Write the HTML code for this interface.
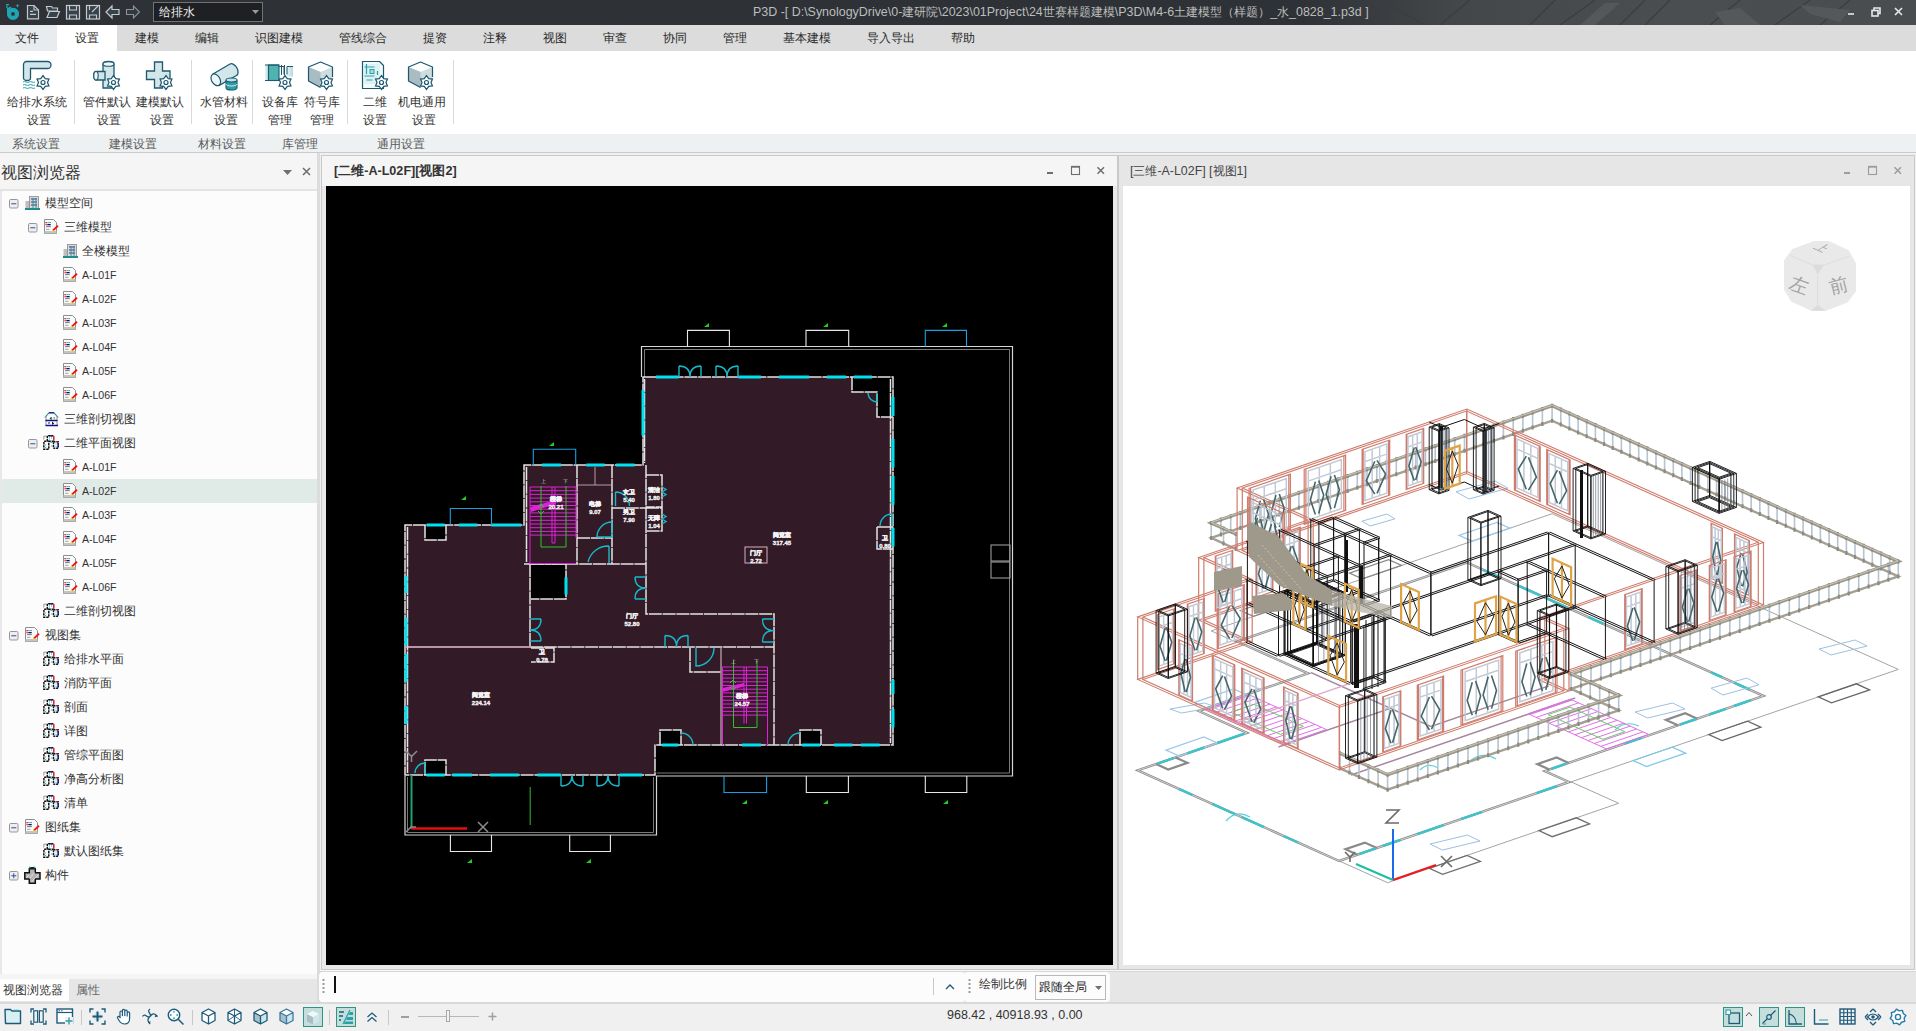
<!DOCTYPE html>
<html><head><meta charset="utf-8"><style>

*{margin:0;padding:0;box-sizing:border-box}
html,body{width:1916px;height:1031px;overflow:hidden;background:#f0f0f0;font-family:"Liberation Sans",sans-serif;color:#333}
.a{position:absolute}
.t12{font-size:12px;white-space:nowrap}
.rb{position:absolute;font-size:12px;line-height:17px;text-align:center;color:#333;white-space:nowrap}
.gl{position:absolute;top:135px;font-size:12px;line-height:18px;color:#5a5a5a;white-space:nowrap}
.sep{position:absolute;top:60px;width:1px;height:64px;background:#d9d9d9}
.tr{position:absolute;height:24px;font-size:12px;line-height:24px;color:#333;white-space:nowrap}
svg{position:absolute;overflow:visible}

</style></head><body>
<div class="a" style="left:0;top:0;width:1916px;height:25px;background:#2e3236"></div>
<div class="a" style="left:1300px;top:0;width:616px;height:25px;background:linear-gradient(90deg,rgba(74,77,80,0) 0%,#44474a 25%,#4b4e51 60%,#4a4d50 100%)"></div>
<svg style="left:1380px;top:0" width="536" height="25" viewBox="0 0 536 25">
<g stroke="#3a3d40" stroke-width="1.2" fill="none">
<path d="M0 0 L45 25 M60 25 L90 0 M150 25 L175 0 M180 25 L215 0 M240 25 L265 0 M265 25 L290 0 M330 25 L360 0 M395 25 L430 0 M440 25 L470 0"/>
</g>
<g fill="#55585b"><path d="M200 25 L225 3 L240 3 L215 25Z M335 12 L360 8 L380 25 L345 25Z M420 5 L470 10 L460 22 L430 14Z"/></g>
</svg>
<svg style="left:0;top:0" width="25" height="25" viewBox="0 0 25 25">
<circle cx="13" cy="13.9" r="4" fill="none" stroke="#1fa6b4" stroke-width="4.2"/>
<rect x="7" y="7.6" width="3.4" height="6.4" fill="#1fa6b4"/><rect x="9" y="6.8" width="2.2" height="1.6" fill="#1fa6b4"/>
<rect x="6" y="4" width="3" height="1.2" fill="#1fa6b4"/><rect x="6.2" y="5.5" width="1.4" height="2.3" fill="#1fa6b4"/>
<path d="M17.5 3.8l0.7 1.5 1.5 0.5-1.5 0.5-0.7 1.5-0.7-1.5-1.5-0.5 1.5-0.5z" fill="#1fa6b4"/>
</svg>
<svg style="left:0;top:0" width="150" height="25" viewBox="0 0 150 25">
<g stroke="#c5cacd" stroke-width="1.2" fill="#36424c">
<path d="M27.5 5.5h6.5l4.5 4.5v8.8h-11z"/>
<path d="M46.5 6.5h5l1 1.5h5v3h-10z M47 17.5l2.5-6h10l-2.5 6z"/>
<rect x="66.5" y="5.5" width="13" height="13.5"/>
<rect x="86.5" y="5.5" width="13" height="13.5"/>
<path d="M106 12l6-6v3.5h7v5h-7v3.5z"/>
</g>
<g stroke="#c5cacd" stroke-width="1.1" fill="none">
<path d="M30 11.4h3M30 14.4h6M34 5.5v4.5h4.5"/>
<path d="M69.5 5.5v4.5h7v-4.5 M69.5 19v-4h7v4"/>
<path d="M89.5 5.5v4.5 M89.5 19v-4h7v4 M92 12l6-6"/>
</g>
<path d="M126.5 9.5h7v-3.5l6 6-6 6v-3.5h-7z" stroke="#8d9296" stroke-width="1.1" fill="#323a40"/>
</svg>
<div class="a" style="left:153px;top:2px;width:110px;height:20px;background:#1f2023;border:1px solid #707274"></div>
<div class="a t12" style="left:159px;top:3px;line-height:18px;color:#f0f0f0">给排水</div>
<svg style="left:252px;top:10px" width="8" height="5"><path d="M0 0h7l-3.5 4z" fill="#9a9a9a"/></svg>
<div class="a" style="left:753px;top:2px;font-size:12.45px;line-height:20px;color:#bdbdbd;white-space:nowrap">P3D -[ D:\SynologyDrive\0-建研院\2023\01Project\24世赛样题建模\P3D\M4-6土建模型（样题）_水_0828_1.p3d ]</div>
<svg style="left:1840px;top:0" width="76" height="25" viewBox="0 0 76 25">
<g stroke="#e8e8e8" stroke-width="1.6" fill="none">
<path d="M8 14h6"/>
<rect x="32" y="10.5" width="6" height="5.5"/><path d="M34 10.5v-2.5h6v5.5h-2"/>
<path d="M55 8l7 7M62 8l-7 7"/>
</g></svg>
<div class="a" style="left:0;top:25px;width:1916px;height:26px;background:#dcdcdc"></div>
<div class="a" style="left:0;top:25px;width:57px;height:26px;background:#e9ecee"></div>
<div class="a" style="left:57px;top:25px;width:60px;height:26px;background:#ffffff"></div>
<div class="a t12" style="left:15px;top:25px;line-height:26px;color:#2a2a2a">文件</div>
<div class="a t12" style="left:75px;top:25px;line-height:26px;color:#2a2a2a">设置</div>
<div class="a t12" style="left:135px;top:25px;line-height:26px;color:#2a2a2a">建模</div>
<div class="a t12" style="left:195px;top:25px;line-height:26px;color:#2a2a2a">编辑</div>
<div class="a t12" style="left:255px;top:25px;line-height:26px;color:#2a2a2a">识图建模</div>
<div class="a t12" style="left:339px;top:25px;line-height:26px;color:#2a2a2a">管线综合</div>
<div class="a t12" style="left:423px;top:25px;line-height:26px;color:#2a2a2a">提资</div>
<div class="a t12" style="left:483px;top:25px;line-height:26px;color:#2a2a2a">注释</div>
<div class="a t12" style="left:543px;top:25px;line-height:26px;color:#2a2a2a">视图</div>
<div class="a t12" style="left:603px;top:25px;line-height:26px;color:#2a2a2a">审查</div>
<div class="a t12" style="left:663px;top:25px;line-height:26px;color:#2a2a2a">协同</div>
<div class="a t12" style="left:723px;top:25px;line-height:26px;color:#2a2a2a">管理</div>
<div class="a t12" style="left:783px;top:25px;line-height:26px;color:#2a2a2a">基本建模</div>
<div class="a t12" style="left:867px;top:25px;line-height:26px;color:#2a2a2a">导入导出</div>
<div class="a t12" style="left:951px;top:25px;line-height:26px;color:#2a2a2a">帮助</div>
<div class="a" style="left:0;top:51px;width:1916px;height:83px;background:#fff"></div>
<div class="a" style="left:0;top:134px;width:1916px;height:18px;background:#eef1f2"></div>
<div class="a" style="left:0;top:152px;width:1916px;height:1px;background:#c9cccd"></div>
<div class="sep" style="left:74px"></div>
<div class="sep" style="left:191px"></div>
<div class="sep" style="left:252px"></div>
<div class="sep" style="left:347px"></div>
<div class="sep" style="left:453px"></div>
<div class="rb" style="left:7px;top:94px">给排水系统</div>
<div class="rb" style="left:27px;top:112px">设置</div>
<div class="rb" style="left:83px;top:94px">管件默认</div>
<div class="rb" style="left:97px;top:112px">设置</div>
<div class="rb" style="left:136px;top:94px">建模默认</div>
<div class="rb" style="left:150px;top:112px">设置</div>
<div class="rb" style="left:200px;top:94px">水管材料</div>
<div class="rb" style="left:214px;top:112px">设置</div>
<div class="rb" style="left:262px;top:94px">设备库</div>
<div class="rb" style="left:268px;top:112px">管理</div>
<div class="rb" style="left:304px;top:94px">符号库</div>
<div class="rb" style="left:310px;top:112px">管理</div>
<div class="rb" style="left:363px;top:94px">二维</div>
<div class="rb" style="left:363px;top:112px">设置</div>
<div class="rb" style="left:398px;top:94px">机电通用</div>
<div class="rb" style="left:412px;top:112px">设置</div>
<div class="gl" style="left:12px">系统设置</div>
<div class="gl" style="left:109px">建模设置</div>
<div class="gl" style="left:198px">材料设置</div>
<div class="gl" style="left:282px">库管理</div>
<div class="gl" style="left:377px">通用设置</div>
<svg style="left:22px;top:60px" width="30" height="30" viewBox="0 0 30 30">
<path d="M1.5 18V4.5a3 3 0 0 1 3-3H25.5a2.2 2.2 0 0 1 0 7H8.5V18a3.5 2.5 0 0 1-7 0z" fill="#d3e7eb" stroke="#1d5870" stroke-width="1.3"/>
<path d="M1 22c2-1.5 4 1.5 6 0s4 1.5 6 0 M1 25c2-1.5 4 1.5 6 0s4 1.5 6 0 M1 28c2-1.5 4 1.5 6 0s4 1.5 6 0" fill="none" stroke="#2a9fa8" stroke-width="1"/>
<polygon points="26.98,25.95 23.25,26.40 21.00,29.40 18.75,26.40 15.02,25.95 16.50,22.50 15.02,19.05 18.75,18.60 21.00,15.60 23.25,18.60 26.98,19.05 25.50,22.50" fill="#fff" stroke="#1d5870" stroke-width="1.2" stroke-linejoin="miter"/><circle cx="21" cy="22.5" r="2" fill="none" stroke="#1d5870" stroke-width="1.2"/></svg>
<svg style="left:93px;top:60px" width="30" height="30" viewBox="0 0 30 30">
<path d="M10 4a5.5 2.5 0 0 1 11 0V28H10z" fill="#d3e7eb" stroke="#1d5870" stroke-width="1.3"/>
<ellipse cx="15.5" cy="4" rx="5.5" ry="2.3" fill="#eef6f7" stroke="#1d5870" stroke-width="1.1"/>
<path d="M3 11.5h9v8.5H3a2.3 4.25 0 0 1 0-8.5z" fill="#d3e7eb" stroke="#1d5870" stroke-width="1.3"/>
<ellipse cx="3" cy="15.75" rx="2.2" ry="4.2" fill="#eef6f7" stroke="#1d5870" stroke-width="1.1"/>
<polygon points="26.48,25.95 22.75,26.40 20.50,29.40 18.25,26.40 14.52,25.95 16.00,22.50 14.52,19.05 18.25,18.60 20.50,15.60 22.75,18.60 26.48,19.05 25.00,22.50" fill="#fff" stroke="#1d5870" stroke-width="1.2" stroke-linejoin="miter"/><circle cx="20.5" cy="22.5" r="2" fill="none" stroke="#1d5870" stroke-width="1.2"/></svg>
<svg style="left:145px;top:60px" width="30" height="30" viewBox="0 0 30 30">
<path d="M9.5 2h8v9h7.5v8.5h-7.5V28h-8V19.5H1.5V11h8z" fill="#d3e7eb" stroke="#1d5870" stroke-width="1.3"/>
<polygon points="26.98,25.95 23.25,26.40 21.00,29.40 18.75,26.40 15.02,25.95 16.50,22.50 15.02,19.05 18.75,18.60 21.00,15.60 23.25,18.60 26.98,19.05 25.50,22.50" fill="#fff" stroke="#1d5870" stroke-width="1.2" stroke-linejoin="miter"/><circle cx="21" cy="22.5" r="2" fill="none" stroke="#1d5870" stroke-width="1.2"/></svg>
<svg style="left:208px;top:60px" width="31" height="30" viewBox="0 0 31 30">
<path d="M5 14L22 4a4 6.5 -30 0 1 6.5 11.5L11 25.5z" fill="#d3e7eb" stroke="#1d5870" stroke-width="1.3"/>
<ellipse cx="7.8" cy="19.8" rx="4.2" ry="6.3" transform="rotate(-30 7.8 19.8)" fill="#eef6f7" stroke="#1d5870" stroke-width="1.2"/>
<path d="M18 20v8a5.5 2 0 0 0 11 0v-8" fill="#2a9fa8" stroke="#1d5870" stroke-width="1.1"/>
<ellipse cx="23.5" cy="20" rx="5.5" ry="2" fill="#bfe3e6" stroke="#1d5870" stroke-width="1.1"/>
<path d="M18 24a5.5 2 0 0 0 11 0" fill="none" stroke="#fff" stroke-width="0.8"/>
</svg>
<svg style="left:264px;top:60px" width="32" height="30" viewBox="0 0 32 30">
<defs><linearGradient id="gb1" x1="0" x2="1"><stop offset="0" stop-color="#e8f4f6"/><stop offset="1" stop-color="#b8d8dc"/></linearGradient></defs>
<rect x="1" y="5" width="3.5" height="15.5" fill="url(#gb1)"/>
<rect x="4.5" y="5" width="10.5" height="15.5" fill="#4fb3b0" stroke="#1d5870" stroke-width="1.1"/>
<path d="M1 5h14 M1 20.5h14" stroke="#1d5870" stroke-width="1.2"/>
<path d="M15 6.5h5v8 M17.5 5v10 M20.5 5v10" stroke="#1d5870" stroke-width="1" fill="none"/>
<rect x="23" y="6.5" width="6" height="10" fill="url(#gb1)"/><path d="M23 6.5h6 M23 6.5v8" stroke="#1d5870" stroke-width="1" fill="none"/>
<polygon points="26.98,25.95 23.25,26.40 21.00,29.40 18.75,26.40 15.02,25.95 16.50,22.50 15.02,19.05 18.75,18.60 21.00,15.60 23.25,18.60 26.98,19.05 25.50,22.50" fill="#fff" stroke="#1d5870" stroke-width="1.2" stroke-linejoin="miter"/><circle cx="21" cy="22.5" r="2" fill="none" stroke="#1d5870" stroke-width="1.2"/></svg>
<svg style="left:306px;top:60px" width="30" height="30" viewBox="0 0 30 30">
<path d="M2.5 7L14.5 2 26.5 7V21L14.5 27.5 2.5 21z" fill="#cfdcdf"/>
<path d="M2.5 7L14.5 2 26.5 7 14.5 12z" fill="#ffffff"/>
<path d="M2.5 7L14.5 12V27.5L2.5 21z" fill="#a9bcc1"/>
<path d="M14.5 27.5L2.5 21V7L14.5 2 26.5 7V17" fill="none" stroke="#1d5870" stroke-width="1.2" stroke-linejoin="round"/>
<polygon points="26.48,25.95 22.75,26.40 20.50,29.40 18.25,26.40 14.52,25.95 16.00,22.50 14.52,19.05 18.25,18.60 20.50,15.60 22.75,18.60 26.48,19.05 25.00,22.50" fill="#fff" stroke="#1d5870" stroke-width="1.2" stroke-linejoin="miter"/><circle cx="20.5" cy="22.5" r="2" fill="none" stroke="#1d5870" stroke-width="1.2"/></svg>
<svg style="left:361px;top:60px" width="30" height="30" viewBox="0 0 30 30">
<path d="M1.5 1.5h17l4 4V28.5h-21z" fill="#f4fbfc" stroke="#1d5870" stroke-width="1.2" stroke-linejoin="round"/>
<rect x="3" y="4" width="16" height="20" fill="#def2f6"/>
<path d="M5.5 4v10 M3.5 7h10 M3.5 16h10 M5.5 20h6 M16.5 11v4" stroke="#27a3a8" stroke-width="1.2" fill="none"/>
<rect x="9" y="9.5" width="4" height="4" fill="#a8dcd8" stroke="#27a3a8" stroke-width="1"/>
<polygon points="26.48,25.95 22.75,26.40 20.50,29.40 18.25,26.40 14.52,25.95 16.00,22.50 14.52,19.05 18.25,18.60 20.50,15.60 22.75,18.60 26.48,19.05 25.00,22.50" fill="#fff" stroke="#1d5870" stroke-width="1.2" stroke-linejoin="miter"/><circle cx="20.5" cy="22.5" r="2" fill="none" stroke="#1d5870" stroke-width="1.2"/></svg>
<svg style="left:406px;top:60px" width="30" height="30" viewBox="0 0 30 30">
<path d="M2.5 7L14.5 2 26.5 7V21L14.5 27.5 2.5 21z" fill="#cfdcdf"/>
<path d="M2.5 7L14.5 2 26.5 7 14.5 12z" fill="#ffffff"/>
<path d="M2.5 7L14.5 12V27.5L2.5 21z" fill="#a9bcc1"/>
<path d="M14.5 27.5L2.5 21V7L14.5 2 26.5 7V17" fill="none" stroke="#1d5870" stroke-width="1.2" stroke-linejoin="round"/>
<polygon points="26.48,25.95 22.75,26.40 20.50,29.40 18.25,26.40 14.52,25.95 16.00,22.50 14.52,19.05 18.25,18.60 20.50,15.60 22.75,18.60 26.48,19.05 25.00,22.50" fill="#fff" stroke="#1d5870" stroke-width="1.2" stroke-linejoin="miter"/><circle cx="20.5" cy="22.5" r="2" fill="none" stroke="#1d5870" stroke-width="1.2"/></svg>
<div class="a" style="left:320px;top:153px;width:1596px;height:850px;background:#f0f0f0"></div>
<div class="a" style="left:321px;top:155px;width:797px;height:815px;background:#e8e8e8;border:1px solid #c9c9c9"></div>
<div class="a" style="left:322px;top:156px;width:795px;height:30px;background:#f5f5f5"></div>
<div class="a" style="left:334px;top:163px;font-size:12.6px;font-weight:bold;line-height:17px;color:#333;white-space:nowrap">[二维-A-L02F][视图2]</div>
<svg style="left:1047px;top:165px" width="64" height="12" viewBox="0 0 64 12">
<path d="M0 8h6" stroke="#6e6e6e" stroke-width="2"/>
<rect x="24.5" y="1.5" width="8" height="8" fill="none" stroke="#6e6e6e" stroke-width="1.1"/><path d="M24 1.8h9" stroke="#6e6e6e" stroke-width="1.8"/>
<path d="M50.5 2.3l6.5 6.5M57 2.3l-6.5 6.5" stroke="#6e6e6e" stroke-width="1.5"/></svg>
<div class="a" style="left:326px;top:186px;width:787px;height:779px;background:#000"></div>
<div class="a" style="left:1118px;top:155px;width:797px;height:815px;background:#e6e6e6;border:1px solid #c9c9c9"></div>
<div class="a" style="left:1130px;top:163px;font-size:12.4px;line-height:17px;color:#444;white-space:nowrap">[三维-A-L02F] [视图1]</div>
<svg style="left:1844px;top:165px" width="64" height="12" viewBox="0 0 64 12">
<path d="M0 8h6" stroke="#9c9c9c" stroke-width="2"/>
<rect x="24.5" y="1.5" width="8" height="8" fill="none" stroke="#9c9c9c" stroke-width="1.1"/><path d="M24 1.8h9" stroke="#9c9c9c" stroke-width="1.8"/>
<path d="M50.5 2.3l6.5 6.5M57 2.3l-6.5 6.5" stroke="#9c9c9c" stroke-width="1.5"/></svg>
<div class="a" style="left:1123px;top:186px;width:787px;height:779px;background:#fff"></div>
<svg style="left:1784px;top:241px" width="74" height="72" viewBox="0 0 74 72">
<path d="M8.3 7.9L30.1 0H44.9L64.6 9.2L72 22.3V50.2L63.7 61.5L41.9 69.8H27L7 60.6L0 48.4V19.6Z" fill="#e9e9e9"/>
<path d="M6.5 14.4L28.8 24H40.1L65 15.3" stroke="#dddddd" stroke-width="1" fill="none"/>
<path d="M28.8 24H40.1L33.6 33.6Z M27 69.8H41.9L33.6 63.5Z" fill="#dcdcdc"/>
<path d="M33.6 33.6V64" stroke="#dedede" stroke-width="1.2"/>
<text x="15.5" y="51" font-size="19" fill="#a4a4a4" text-anchor="middle" transform="rotate(20 15.5 43)" font-family="Liberation Sans">左</text>
<text x="54.5" y="51" font-size="19" fill="#a4a4a4" text-anchor="middle" transform="rotate(-14 54.5 44)" font-family="Liberation Sans">前</text>
<text x="39" y="14" font-size="11" fill="#a4a4a4" text-anchor="middle" transform="translate(5 0) rotate(24 39 10) skewX(-35)" font-family="Liberation Sans">上</text>
</svg>
<div class="a" style="left:0;top:153px;width:317px;height:849px;background:#f5f5f5"></div>
<div class="a" style="left:317px;top:153px;width:3px;height:849px;background:#dcdcdc"></div>
<div class="a" style="left:1px;top:163px;font-size:16px;line-height:20px;color:#333;white-space:nowrap">视图浏览器</div>
<svg style="left:283px;top:170px" width="9" height="5"><path d="M0 0h9l-4.5 5z" fill="#707070"/></svg>
<svg style="left:302px;top:167px" width="9" height="9"><path d="M1 1l7 7M8 1l-7 7" stroke="#6f6f6f" stroke-width="1.6"/></svg>
<div class="a" style="left:0;top:189px;width:317px;height:2px;background:#e3e3e3"></div>
<div class="a" style="left:0;top:191px;width:2px;height:783px;background:#e8e8e8"></div>
<div class="a" style="left:2px;top:191px;width:315px;height:783px;background:#fcfcfc"></div>
<div class="a" style="left:2px;top:479px;width:315px;height:24px;background:#e0ebe8"></div>
<div class="a" style="left:0;top:979px;width:317px;height:23px;background:#e6e6e6"></div>
<div class="a" style="left:0;top:979px;width:69px;height:22px;background:#ffffff"></div>
<div class="a t12" style="left:3px;top:981px;line-height:18px;color:#333">视图浏览器</div>
<div class="a t12" style="left:76px;top:981px;line-height:18px;color:#666">属性</div>
<svg style="left:9px;top:199px" width="10" height="10" viewBox="0 0 10 10"><defs></defs><rect x="0.5" y="0.5" width="8.5" height="8.5" rx="1.2" fill="#efefef" stroke="#959595" stroke-width="1"/><path d="M2.3 4.75h5" stroke="#3f5aa8" stroke-width="1.1"/></svg>
<svg style="left:25px;top:195px" width="16" height="15" viewBox="0 0 16 15">
<rect x="0.5" y="6" width="5" height="8" fill="#bdbdbd"/><rect x="4.5" y="1.5" width="9" height="12.5" fill="#d8d8d8" stroke="#8a8a8a" stroke-width="0.8"/>
<path d="M6 4h6M6 7h6M6 10h6" stroke="#3a3a9a" stroke-width="1.2"/><path d="M8 3v10M11 3v10" stroke="#2c8f8f" stroke-width="0.9"/>
<rect x="0" y="13" width="15" height="2" fill="#218c8c"/></svg>
<div class="tr" style="left:45px;top:191px">模型空间</div>
<svg style="left:28px;top:223px" width="10" height="10" viewBox="0 0 10 10"><defs></defs><rect x="0.5" y="0.5" width="8.5" height="8.5" rx="1.2" fill="#efefef" stroke="#959595" stroke-width="1"/><path d="M2.3 4.75h5" stroke="#3f5aa8" stroke-width="1.1"/></svg>
<svg style="left:44px;top:219px" width="15" height="15" viewBox="0 0 15 15">
<path d="M0.5 0.5h9l3 3v11h-12z" fill="#fafafa" stroke="#8e8e8e" stroke-width="1"/>
<rect x="0.5" y="12" width="12" height="2.5" fill="#c4c4c4"/>
<rect x="1.5" y="3" width="1.3" height="1.3" fill="#a01818"/><rect x="3.3" y="3.2" width="2.2" height="0.9" fill="#8a8a8a"/><rect x="5.4" y="3.2" width="1.6" height="0.9" fill="#209a9a"/>
<rect x="1.5" y="5" width="1.3" height="1.3" fill="#e82020"/><rect x="3.3" y="5" width="3.4" height="1.3" fill="#10107a"/>
<rect x="2" y="7.2" width="4.8" height="0.9" fill="#6a6a6a"/><rect x="2" y="9.8" width="3.5" height="0.9" fill="#9a9a9a"/>
<path d="M8.8 11.6L14 6.8" stroke="#f01414" stroke-width="1.9"/><rect x="8" y="11.2" width="1.6" height="1.6" fill="#f4ec00"/></svg>
<div class="tr" style="left:64px;top:215px">三维模型</div>
<svg style="left:63px;top:243px" width="16" height="15" viewBox="0 0 16 15">
<rect x="0.5" y="6" width="5" height="8" fill="#bdbdbd"/><rect x="4.5" y="1.5" width="9" height="12.5" fill="#d8d8d8" stroke="#8a8a8a" stroke-width="0.8"/>
<path d="M6 4h6M6 7h6M6 10h6" stroke="#3a3a9a" stroke-width="1.2"/><path d="M8 3v10M11 3v10" stroke="#2c8f8f" stroke-width="0.9"/>
<rect x="0" y="13" width="15" height="2" fill="#218c8c"/></svg>
<div class="tr" style="left:82px;top:239px">全楼模型</div>
<svg style="left:63px;top:267px" width="15" height="15" viewBox="0 0 15 15">
<path d="M0.5 0.5h9l3 3v11h-12z" fill="#fafafa" stroke="#8e8e8e" stroke-width="1"/>
<rect x="0.5" y="12" width="12" height="2.5" fill="#c4c4c4"/>
<rect x="1.5" y="3" width="1.3" height="1.3" fill="#a01818"/><rect x="3.3" y="3.2" width="2.2" height="0.9" fill="#8a8a8a"/><rect x="5.4" y="3.2" width="1.6" height="0.9" fill="#209a9a"/>
<rect x="1.5" y="5" width="1.3" height="1.3" fill="#e82020"/><rect x="3.3" y="5" width="3.4" height="1.3" fill="#10107a"/>
<rect x="2" y="7.2" width="4.8" height="0.9" fill="#6a6a6a"/><rect x="2" y="9.8" width="3.5" height="0.9" fill="#9a9a9a"/>
<path d="M8.8 11.6L14 6.8" stroke="#f01414" stroke-width="1.9"/><rect x="8" y="11.2" width="1.6" height="1.6" fill="#f4ec00"/></svg>
<div class="tr" style="left:82px;top:263px;font-size:10.6px;letter-spacing:-0.05px">A-L01F</div>
<svg style="left:63px;top:291px" width="15" height="15" viewBox="0 0 15 15">
<path d="M0.5 0.5h9l3 3v11h-12z" fill="#fafafa" stroke="#8e8e8e" stroke-width="1"/>
<rect x="0.5" y="12" width="12" height="2.5" fill="#c4c4c4"/>
<rect x="1.5" y="3" width="1.3" height="1.3" fill="#a01818"/><rect x="3.3" y="3.2" width="2.2" height="0.9" fill="#8a8a8a"/><rect x="5.4" y="3.2" width="1.6" height="0.9" fill="#209a9a"/>
<rect x="1.5" y="5" width="1.3" height="1.3" fill="#e82020"/><rect x="3.3" y="5" width="3.4" height="1.3" fill="#10107a"/>
<rect x="2" y="7.2" width="4.8" height="0.9" fill="#6a6a6a"/><rect x="2" y="9.8" width="3.5" height="0.9" fill="#9a9a9a"/>
<path d="M8.8 11.6L14 6.8" stroke="#f01414" stroke-width="1.9"/><rect x="8" y="11.2" width="1.6" height="1.6" fill="#f4ec00"/></svg>
<div class="tr" style="left:82px;top:287px;font-size:10.6px;letter-spacing:-0.05px">A-L02F</div>
<svg style="left:63px;top:315px" width="15" height="15" viewBox="0 0 15 15">
<path d="M0.5 0.5h9l3 3v11h-12z" fill="#fafafa" stroke="#8e8e8e" stroke-width="1"/>
<rect x="0.5" y="12" width="12" height="2.5" fill="#c4c4c4"/>
<rect x="1.5" y="3" width="1.3" height="1.3" fill="#a01818"/><rect x="3.3" y="3.2" width="2.2" height="0.9" fill="#8a8a8a"/><rect x="5.4" y="3.2" width="1.6" height="0.9" fill="#209a9a"/>
<rect x="1.5" y="5" width="1.3" height="1.3" fill="#e82020"/><rect x="3.3" y="5" width="3.4" height="1.3" fill="#10107a"/>
<rect x="2" y="7.2" width="4.8" height="0.9" fill="#6a6a6a"/><rect x="2" y="9.8" width="3.5" height="0.9" fill="#9a9a9a"/>
<path d="M8.8 11.6L14 6.8" stroke="#f01414" stroke-width="1.9"/><rect x="8" y="11.2" width="1.6" height="1.6" fill="#f4ec00"/></svg>
<div class="tr" style="left:82px;top:311px;font-size:10.6px;letter-spacing:-0.05px">A-L03F</div>
<svg style="left:63px;top:339px" width="15" height="15" viewBox="0 0 15 15">
<path d="M0.5 0.5h9l3 3v11h-12z" fill="#fafafa" stroke="#8e8e8e" stroke-width="1"/>
<rect x="0.5" y="12" width="12" height="2.5" fill="#c4c4c4"/>
<rect x="1.5" y="3" width="1.3" height="1.3" fill="#a01818"/><rect x="3.3" y="3.2" width="2.2" height="0.9" fill="#8a8a8a"/><rect x="5.4" y="3.2" width="1.6" height="0.9" fill="#209a9a"/>
<rect x="1.5" y="5" width="1.3" height="1.3" fill="#e82020"/><rect x="3.3" y="5" width="3.4" height="1.3" fill="#10107a"/>
<rect x="2" y="7.2" width="4.8" height="0.9" fill="#6a6a6a"/><rect x="2" y="9.8" width="3.5" height="0.9" fill="#9a9a9a"/>
<path d="M8.8 11.6L14 6.8" stroke="#f01414" stroke-width="1.9"/><rect x="8" y="11.2" width="1.6" height="1.6" fill="#f4ec00"/></svg>
<div class="tr" style="left:82px;top:335px;font-size:10.6px;letter-spacing:-0.05px">A-L04F</div>
<svg style="left:63px;top:363px" width="15" height="15" viewBox="0 0 15 15">
<path d="M0.5 0.5h9l3 3v11h-12z" fill="#fafafa" stroke="#8e8e8e" stroke-width="1"/>
<rect x="0.5" y="12" width="12" height="2.5" fill="#c4c4c4"/>
<rect x="1.5" y="3" width="1.3" height="1.3" fill="#a01818"/><rect x="3.3" y="3.2" width="2.2" height="0.9" fill="#8a8a8a"/><rect x="5.4" y="3.2" width="1.6" height="0.9" fill="#209a9a"/>
<rect x="1.5" y="5" width="1.3" height="1.3" fill="#e82020"/><rect x="3.3" y="5" width="3.4" height="1.3" fill="#10107a"/>
<rect x="2" y="7.2" width="4.8" height="0.9" fill="#6a6a6a"/><rect x="2" y="9.8" width="3.5" height="0.9" fill="#9a9a9a"/>
<path d="M8.8 11.6L14 6.8" stroke="#f01414" stroke-width="1.9"/><rect x="8" y="11.2" width="1.6" height="1.6" fill="#f4ec00"/></svg>
<div class="tr" style="left:82px;top:359px;font-size:10.6px;letter-spacing:-0.05px">A-L05F</div>
<svg style="left:63px;top:387px" width="15" height="15" viewBox="0 0 15 15">
<path d="M0.5 0.5h9l3 3v11h-12z" fill="#fafafa" stroke="#8e8e8e" stroke-width="1"/>
<rect x="0.5" y="12" width="12" height="2.5" fill="#c4c4c4"/>
<rect x="1.5" y="3" width="1.3" height="1.3" fill="#a01818"/><rect x="3.3" y="3.2" width="2.2" height="0.9" fill="#8a8a8a"/><rect x="5.4" y="3.2" width="1.6" height="0.9" fill="#209a9a"/>
<rect x="1.5" y="5" width="1.3" height="1.3" fill="#e82020"/><rect x="3.3" y="5" width="3.4" height="1.3" fill="#10107a"/>
<rect x="2" y="7.2" width="4.8" height="0.9" fill="#6a6a6a"/><rect x="2" y="9.8" width="3.5" height="0.9" fill="#9a9a9a"/>
<path d="M8.8 11.6L14 6.8" stroke="#f01414" stroke-width="1.9"/><rect x="8" y="11.2" width="1.6" height="1.6" fill="#f4ec00"/></svg>
<div class="tr" style="left:82px;top:383px;font-size:10.6px;letter-spacing:-0.05px">A-L06F</div>
<svg style="left:44px;top:412px" width="16" height="15" viewBox="0 0 16 15">
<path d="M0.8 5.5L5 0.8h5l4.2 4.7" fill="none" stroke="#2a8f8f" stroke-width="1.1"/><path d="M5 0.8h5" stroke="#1a1a90" stroke-width="1.3"/>
<path d="M2 4v9.5M13 4v9.5" stroke="#8a8a8a" stroke-width="0.9"/>
<path d="M1.5 8.5h12M1.5 13.5h12.5" stroke="#101090" stroke-width="1.3"/>
<path d="M7.5 5l-1.5 1.5 1.5 1 M9.5 6h1.5" stroke="#107010" stroke-width="1"/><path d="M4 11h2M8.5 10v2.3l1.5-1" stroke="#202020" stroke-width="1"/></svg>
<div class="tr" style="left:64px;top:407px">三维剖切视图</div>
<svg style="left:28px;top:439px" width="10" height="10" viewBox="0 0 10 10"><defs></defs><rect x="0.5" y="0.5" width="8.5" height="8.5" rx="1.2" fill="#efefef" stroke="#959595" stroke-width="1"/><path d="M2.3 4.75h5" stroke="#3f5aa8" stroke-width="1.1"/></svg>
<svg style="left:43px;top:435px" width="17" height="16" viewBox="0 0 17 16">
<path d="M3.3 1.2H0.8V4.5" stroke="#9a9a9a" stroke-width="1" fill="none"/>
<path d="M4.3 6V0.8H10.8" stroke="#111" stroke-width="1.4" fill="none" stroke-dasharray="2.2 0.8"/>
<path d="M10.8 0.8V5.5" stroke="#d01818" stroke-width="1.4"/><path d="M6.5 0.8h2.5" stroke="#1a1a90" stroke-width="1.4"/>
<path d="M0.8 7V14.2H5.8V6.3H0.8" stroke="#111" stroke-width="1.5" fill="none" stroke-dasharray="2.4 0.8"/>
<path d="M5.8 6.3H10.5V13.2" stroke="#111" stroke-width="1.4" fill="none" stroke-dasharray="2 0.8"/>
<path d="M10.5 6.8H15.2V13.2H10.5" stroke="#111" stroke-width="1.4" fill="none" stroke-dasharray="2 0.8"/>
<path d="M15.2 7.8V12" stroke="#1a1a90" stroke-width="1.4"/><path d="M14 6.8h1.3M0.8 7.5v1.5" stroke="#d01818" stroke-width="1.3"/>
<path d="M6 3h1M8 3h1M6 5h1M2.5 9.5v1M2.5 12v1M12.5 9h1M12.5 11.5h1M7.5 7.5h2" stroke="#10c8d8" stroke-width="1.2"/>
<path d="M8 11h1.5" stroke="#a0a0a0" stroke-width="1"/>
</svg>
<div class="tr" style="left:64px;top:431px">二维平面视图</div>
<svg style="left:63px;top:459px" width="15" height="15" viewBox="0 0 15 15">
<path d="M0.5 0.5h9l3 3v11h-12z" fill="#fafafa" stroke="#8e8e8e" stroke-width="1"/>
<rect x="0.5" y="12" width="12" height="2.5" fill="#c4c4c4"/>
<rect x="1.5" y="3" width="1.3" height="1.3" fill="#a01818"/><rect x="3.3" y="3.2" width="2.2" height="0.9" fill="#8a8a8a"/><rect x="5.4" y="3.2" width="1.6" height="0.9" fill="#209a9a"/>
<rect x="1.5" y="5" width="1.3" height="1.3" fill="#e82020"/><rect x="3.3" y="5" width="3.4" height="1.3" fill="#10107a"/>
<rect x="2" y="7.2" width="4.8" height="0.9" fill="#6a6a6a"/><rect x="2" y="9.8" width="3.5" height="0.9" fill="#9a9a9a"/>
<path d="M8.8 11.6L14 6.8" stroke="#f01414" stroke-width="1.9"/><rect x="8" y="11.2" width="1.6" height="1.6" fill="#f4ec00"/></svg>
<div class="tr" style="left:82px;top:455px;font-size:10.6px;letter-spacing:-0.05px">A-L01F</div>
<svg style="left:63px;top:483px" width="15" height="15" viewBox="0 0 15 15">
<path d="M0.5 0.5h9l3 3v11h-12z" fill="#fafafa" stroke="#8e8e8e" stroke-width="1"/>
<rect x="0.5" y="12" width="12" height="2.5" fill="#c4c4c4"/>
<rect x="1.5" y="3" width="1.3" height="1.3" fill="#a01818"/><rect x="3.3" y="3.2" width="2.2" height="0.9" fill="#8a8a8a"/><rect x="5.4" y="3.2" width="1.6" height="0.9" fill="#209a9a"/>
<rect x="1.5" y="5" width="1.3" height="1.3" fill="#e82020"/><rect x="3.3" y="5" width="3.4" height="1.3" fill="#10107a"/>
<rect x="2" y="7.2" width="4.8" height="0.9" fill="#6a6a6a"/><rect x="2" y="9.8" width="3.5" height="0.9" fill="#9a9a9a"/>
<path d="M8.8 11.6L14 6.8" stroke="#f01414" stroke-width="1.9"/><rect x="8" y="11.2" width="1.6" height="1.6" fill="#f4ec00"/></svg>
<div class="tr" style="left:82px;top:479px;font-size:10.6px;letter-spacing:-0.05px">A-L02F</div>
<svg style="left:63px;top:507px" width="15" height="15" viewBox="0 0 15 15">
<path d="M0.5 0.5h9l3 3v11h-12z" fill="#fafafa" stroke="#8e8e8e" stroke-width="1"/>
<rect x="0.5" y="12" width="12" height="2.5" fill="#c4c4c4"/>
<rect x="1.5" y="3" width="1.3" height="1.3" fill="#a01818"/><rect x="3.3" y="3.2" width="2.2" height="0.9" fill="#8a8a8a"/><rect x="5.4" y="3.2" width="1.6" height="0.9" fill="#209a9a"/>
<rect x="1.5" y="5" width="1.3" height="1.3" fill="#e82020"/><rect x="3.3" y="5" width="3.4" height="1.3" fill="#10107a"/>
<rect x="2" y="7.2" width="4.8" height="0.9" fill="#6a6a6a"/><rect x="2" y="9.8" width="3.5" height="0.9" fill="#9a9a9a"/>
<path d="M8.8 11.6L14 6.8" stroke="#f01414" stroke-width="1.9"/><rect x="8" y="11.2" width="1.6" height="1.6" fill="#f4ec00"/></svg>
<div class="tr" style="left:82px;top:503px;font-size:10.6px;letter-spacing:-0.05px">A-L03F</div>
<svg style="left:63px;top:531px" width="15" height="15" viewBox="0 0 15 15">
<path d="M0.5 0.5h9l3 3v11h-12z" fill="#fafafa" stroke="#8e8e8e" stroke-width="1"/>
<rect x="0.5" y="12" width="12" height="2.5" fill="#c4c4c4"/>
<rect x="1.5" y="3" width="1.3" height="1.3" fill="#a01818"/><rect x="3.3" y="3.2" width="2.2" height="0.9" fill="#8a8a8a"/><rect x="5.4" y="3.2" width="1.6" height="0.9" fill="#209a9a"/>
<rect x="1.5" y="5" width="1.3" height="1.3" fill="#e82020"/><rect x="3.3" y="5" width="3.4" height="1.3" fill="#10107a"/>
<rect x="2" y="7.2" width="4.8" height="0.9" fill="#6a6a6a"/><rect x="2" y="9.8" width="3.5" height="0.9" fill="#9a9a9a"/>
<path d="M8.8 11.6L14 6.8" stroke="#f01414" stroke-width="1.9"/><rect x="8" y="11.2" width="1.6" height="1.6" fill="#f4ec00"/></svg>
<div class="tr" style="left:82px;top:527px;font-size:10.6px;letter-spacing:-0.05px">A-L04F</div>
<svg style="left:63px;top:555px" width="15" height="15" viewBox="0 0 15 15">
<path d="M0.5 0.5h9l3 3v11h-12z" fill="#fafafa" stroke="#8e8e8e" stroke-width="1"/>
<rect x="0.5" y="12" width="12" height="2.5" fill="#c4c4c4"/>
<rect x="1.5" y="3" width="1.3" height="1.3" fill="#a01818"/><rect x="3.3" y="3.2" width="2.2" height="0.9" fill="#8a8a8a"/><rect x="5.4" y="3.2" width="1.6" height="0.9" fill="#209a9a"/>
<rect x="1.5" y="5" width="1.3" height="1.3" fill="#e82020"/><rect x="3.3" y="5" width="3.4" height="1.3" fill="#10107a"/>
<rect x="2" y="7.2" width="4.8" height="0.9" fill="#6a6a6a"/><rect x="2" y="9.8" width="3.5" height="0.9" fill="#9a9a9a"/>
<path d="M8.8 11.6L14 6.8" stroke="#f01414" stroke-width="1.9"/><rect x="8" y="11.2" width="1.6" height="1.6" fill="#f4ec00"/></svg>
<div class="tr" style="left:82px;top:551px;font-size:10.6px;letter-spacing:-0.05px">A-L05F</div>
<svg style="left:63px;top:579px" width="15" height="15" viewBox="0 0 15 15">
<path d="M0.5 0.5h9l3 3v11h-12z" fill="#fafafa" stroke="#8e8e8e" stroke-width="1"/>
<rect x="0.5" y="12" width="12" height="2.5" fill="#c4c4c4"/>
<rect x="1.5" y="3" width="1.3" height="1.3" fill="#a01818"/><rect x="3.3" y="3.2" width="2.2" height="0.9" fill="#8a8a8a"/><rect x="5.4" y="3.2" width="1.6" height="0.9" fill="#209a9a"/>
<rect x="1.5" y="5" width="1.3" height="1.3" fill="#e82020"/><rect x="3.3" y="5" width="3.4" height="1.3" fill="#10107a"/>
<rect x="2" y="7.2" width="4.8" height="0.9" fill="#6a6a6a"/><rect x="2" y="9.8" width="3.5" height="0.9" fill="#9a9a9a"/>
<path d="M8.8 11.6L14 6.8" stroke="#f01414" stroke-width="1.9"/><rect x="8" y="11.2" width="1.6" height="1.6" fill="#f4ec00"/></svg>
<div class="tr" style="left:82px;top:575px;font-size:10.6px;letter-spacing:-0.05px">A-L06F</div>
<svg style="left:43px;top:603px" width="17" height="16" viewBox="0 0 17 16">
<path d="M3.3 1.2H0.8V4.5" stroke="#9a9a9a" stroke-width="1" fill="none"/>
<path d="M4.3 6V0.8H10.8" stroke="#111" stroke-width="1.4" fill="none" stroke-dasharray="2.2 0.8"/>
<path d="M10.8 0.8V5.5" stroke="#d01818" stroke-width="1.4"/><path d="M6.5 0.8h2.5" stroke="#1a1a90" stroke-width="1.4"/>
<path d="M0.8 7V14.2H5.8V6.3H0.8" stroke="#111" stroke-width="1.5" fill="none" stroke-dasharray="2.4 0.8"/>
<path d="M5.8 6.3H10.5V13.2" stroke="#111" stroke-width="1.4" fill="none" stroke-dasharray="2 0.8"/>
<path d="M10.5 6.8H15.2V13.2H10.5" stroke="#111" stroke-width="1.4" fill="none" stroke-dasharray="2 0.8"/>
<path d="M15.2 7.8V12" stroke="#1a1a90" stroke-width="1.4"/><path d="M14 6.8h1.3M0.8 7.5v1.5" stroke="#d01818" stroke-width="1.3"/>
<path d="M6 3h1M8 3h1M6 5h1M2.5 9.5v1M2.5 12v1M12.5 9h1M12.5 11.5h1M7.5 7.5h2" stroke="#10c8d8" stroke-width="1.2"/>
<path d="M8 11h1.5" stroke="#a0a0a0" stroke-width="1"/>
</svg>
<div class="tr" style="left:64px;top:599px">二维剖切视图</div>
<svg style="left:9px;top:631px" width="10" height="10" viewBox="0 0 10 10"><defs></defs><rect x="0.5" y="0.5" width="8.5" height="8.5" rx="1.2" fill="#efefef" stroke="#959595" stroke-width="1"/><path d="M2.3 4.75h5" stroke="#3f5aa8" stroke-width="1.1"/></svg>
<svg style="left:25px;top:627px" width="15" height="15" viewBox="0 0 15 15">
<path d="M0.5 0.5h9l3 3v11h-12z" fill="#fafafa" stroke="#8e8e8e" stroke-width="1"/>
<rect x="0.5" y="12" width="12" height="2.5" fill="#c4c4c4"/>
<rect x="1.5" y="3" width="1.3" height="1.3" fill="#a01818"/><rect x="3.3" y="3.2" width="2.2" height="0.9" fill="#8a8a8a"/><rect x="5.4" y="3.2" width="1.6" height="0.9" fill="#209a9a"/>
<rect x="1.5" y="5" width="1.3" height="1.3" fill="#e82020"/><rect x="3.3" y="5" width="3.4" height="1.3" fill="#10107a"/>
<rect x="2" y="7.2" width="4.8" height="0.9" fill="#6a6a6a"/><rect x="2" y="9.8" width="3.5" height="0.9" fill="#9a9a9a"/>
<path d="M8.8 11.6L14 6.8" stroke="#f01414" stroke-width="1.9"/><rect x="8" y="11.2" width="1.6" height="1.6" fill="#f4ec00"/></svg>
<div class="tr" style="left:45px;top:623px">视图集</div>
<svg style="left:43px;top:651px" width="17" height="16" viewBox="0 0 17 16">
<path d="M3.3 1.2H0.8V4.5" stroke="#9a9a9a" stroke-width="1" fill="none"/>
<path d="M4.3 6V0.8H10.8" stroke="#111" stroke-width="1.4" fill="none" stroke-dasharray="2.2 0.8"/>
<path d="M10.8 0.8V5.5" stroke="#d01818" stroke-width="1.4"/><path d="M6.5 0.8h2.5" stroke="#1a1a90" stroke-width="1.4"/>
<path d="M0.8 7V14.2H5.8V6.3H0.8" stroke="#111" stroke-width="1.5" fill="none" stroke-dasharray="2.4 0.8"/>
<path d="M5.8 6.3H10.5V13.2" stroke="#111" stroke-width="1.4" fill="none" stroke-dasharray="2 0.8"/>
<path d="M10.5 6.8H15.2V13.2H10.5" stroke="#111" stroke-width="1.4" fill="none" stroke-dasharray="2 0.8"/>
<path d="M15.2 7.8V12" stroke="#1a1a90" stroke-width="1.4"/><path d="M14 6.8h1.3M0.8 7.5v1.5" stroke="#d01818" stroke-width="1.3"/>
<path d="M6 3h1M8 3h1M6 5h1M2.5 9.5v1M2.5 12v1M12.5 9h1M12.5 11.5h1M7.5 7.5h2" stroke="#10c8d8" stroke-width="1.2"/>
<path d="M8 11h1.5" stroke="#a0a0a0" stroke-width="1"/>
</svg>
<div class="tr" style="left:64px;top:647px">给排水平面</div>
<svg style="left:43px;top:675px" width="17" height="16" viewBox="0 0 17 16">
<path d="M3.3 1.2H0.8V4.5" stroke="#9a9a9a" stroke-width="1" fill="none"/>
<path d="M4.3 6V0.8H10.8" stroke="#111" stroke-width="1.4" fill="none" stroke-dasharray="2.2 0.8"/>
<path d="M10.8 0.8V5.5" stroke="#d01818" stroke-width="1.4"/><path d="M6.5 0.8h2.5" stroke="#1a1a90" stroke-width="1.4"/>
<path d="M0.8 7V14.2H5.8V6.3H0.8" stroke="#111" stroke-width="1.5" fill="none" stroke-dasharray="2.4 0.8"/>
<path d="M5.8 6.3H10.5V13.2" stroke="#111" stroke-width="1.4" fill="none" stroke-dasharray="2 0.8"/>
<path d="M10.5 6.8H15.2V13.2H10.5" stroke="#111" stroke-width="1.4" fill="none" stroke-dasharray="2 0.8"/>
<path d="M15.2 7.8V12" stroke="#1a1a90" stroke-width="1.4"/><path d="M14 6.8h1.3M0.8 7.5v1.5" stroke="#d01818" stroke-width="1.3"/>
<path d="M6 3h1M8 3h1M6 5h1M2.5 9.5v1M2.5 12v1M12.5 9h1M12.5 11.5h1M7.5 7.5h2" stroke="#10c8d8" stroke-width="1.2"/>
<path d="M8 11h1.5" stroke="#a0a0a0" stroke-width="1"/>
</svg>
<div class="tr" style="left:64px;top:671px">消防平面</div>
<svg style="left:43px;top:699px" width="17" height="16" viewBox="0 0 17 16">
<path d="M3.3 1.2H0.8V4.5" stroke="#9a9a9a" stroke-width="1" fill="none"/>
<path d="M4.3 6V0.8H10.8" stroke="#111" stroke-width="1.4" fill="none" stroke-dasharray="2.2 0.8"/>
<path d="M10.8 0.8V5.5" stroke="#d01818" stroke-width="1.4"/><path d="M6.5 0.8h2.5" stroke="#1a1a90" stroke-width="1.4"/>
<path d="M0.8 7V14.2H5.8V6.3H0.8" stroke="#111" stroke-width="1.5" fill="none" stroke-dasharray="2.4 0.8"/>
<path d="M5.8 6.3H10.5V13.2" stroke="#111" stroke-width="1.4" fill="none" stroke-dasharray="2 0.8"/>
<path d="M10.5 6.8H15.2V13.2H10.5" stroke="#111" stroke-width="1.4" fill="none" stroke-dasharray="2 0.8"/>
<path d="M15.2 7.8V12" stroke="#1a1a90" stroke-width="1.4"/><path d="M14 6.8h1.3M0.8 7.5v1.5" stroke="#d01818" stroke-width="1.3"/>
<path d="M6 3h1M8 3h1M6 5h1M2.5 9.5v1M2.5 12v1M12.5 9h1M12.5 11.5h1M7.5 7.5h2" stroke="#10c8d8" stroke-width="1.2"/>
<path d="M8 11h1.5" stroke="#a0a0a0" stroke-width="1"/>
</svg>
<div class="tr" style="left:64px;top:695px">剖面</div>
<svg style="left:43px;top:723px" width="17" height="16" viewBox="0 0 17 16">
<path d="M3.3 1.2H0.8V4.5" stroke="#9a9a9a" stroke-width="1" fill="none"/>
<path d="M4.3 6V0.8H10.8" stroke="#111" stroke-width="1.4" fill="none" stroke-dasharray="2.2 0.8"/>
<path d="M10.8 0.8V5.5" stroke="#d01818" stroke-width="1.4"/><path d="M6.5 0.8h2.5" stroke="#1a1a90" stroke-width="1.4"/>
<path d="M0.8 7V14.2H5.8V6.3H0.8" stroke="#111" stroke-width="1.5" fill="none" stroke-dasharray="2.4 0.8"/>
<path d="M5.8 6.3H10.5V13.2" stroke="#111" stroke-width="1.4" fill="none" stroke-dasharray="2 0.8"/>
<path d="M10.5 6.8H15.2V13.2H10.5" stroke="#111" stroke-width="1.4" fill="none" stroke-dasharray="2 0.8"/>
<path d="M15.2 7.8V12" stroke="#1a1a90" stroke-width="1.4"/><path d="M14 6.8h1.3M0.8 7.5v1.5" stroke="#d01818" stroke-width="1.3"/>
<path d="M6 3h1M8 3h1M6 5h1M2.5 9.5v1M2.5 12v1M12.5 9h1M12.5 11.5h1M7.5 7.5h2" stroke="#10c8d8" stroke-width="1.2"/>
<path d="M8 11h1.5" stroke="#a0a0a0" stroke-width="1"/>
</svg>
<div class="tr" style="left:64px;top:719px">详图</div>
<svg style="left:43px;top:747px" width="17" height="16" viewBox="0 0 17 16">
<path d="M3.3 1.2H0.8V4.5" stroke="#9a9a9a" stroke-width="1" fill="none"/>
<path d="M4.3 6V0.8H10.8" stroke="#111" stroke-width="1.4" fill="none" stroke-dasharray="2.2 0.8"/>
<path d="M10.8 0.8V5.5" stroke="#d01818" stroke-width="1.4"/><path d="M6.5 0.8h2.5" stroke="#1a1a90" stroke-width="1.4"/>
<path d="M0.8 7V14.2H5.8V6.3H0.8" stroke="#111" stroke-width="1.5" fill="none" stroke-dasharray="2.4 0.8"/>
<path d="M5.8 6.3H10.5V13.2" stroke="#111" stroke-width="1.4" fill="none" stroke-dasharray="2 0.8"/>
<path d="M10.5 6.8H15.2V13.2H10.5" stroke="#111" stroke-width="1.4" fill="none" stroke-dasharray="2 0.8"/>
<path d="M15.2 7.8V12" stroke="#1a1a90" stroke-width="1.4"/><path d="M14 6.8h1.3M0.8 7.5v1.5" stroke="#d01818" stroke-width="1.3"/>
<path d="M6 3h1M8 3h1M6 5h1M2.5 9.5v1M2.5 12v1M12.5 9h1M12.5 11.5h1M7.5 7.5h2" stroke="#10c8d8" stroke-width="1.2"/>
<path d="M8 11h1.5" stroke="#a0a0a0" stroke-width="1"/>
</svg>
<div class="tr" style="left:64px;top:743px">管综平面图</div>
<svg style="left:43px;top:771px" width="17" height="16" viewBox="0 0 17 16">
<path d="M3.3 1.2H0.8V4.5" stroke="#9a9a9a" stroke-width="1" fill="none"/>
<path d="M4.3 6V0.8H10.8" stroke="#111" stroke-width="1.4" fill="none" stroke-dasharray="2.2 0.8"/>
<path d="M10.8 0.8V5.5" stroke="#d01818" stroke-width="1.4"/><path d="M6.5 0.8h2.5" stroke="#1a1a90" stroke-width="1.4"/>
<path d="M0.8 7V14.2H5.8V6.3H0.8" stroke="#111" stroke-width="1.5" fill="none" stroke-dasharray="2.4 0.8"/>
<path d="M5.8 6.3H10.5V13.2" stroke="#111" stroke-width="1.4" fill="none" stroke-dasharray="2 0.8"/>
<path d="M10.5 6.8H15.2V13.2H10.5" stroke="#111" stroke-width="1.4" fill="none" stroke-dasharray="2 0.8"/>
<path d="M15.2 7.8V12" stroke="#1a1a90" stroke-width="1.4"/><path d="M14 6.8h1.3M0.8 7.5v1.5" stroke="#d01818" stroke-width="1.3"/>
<path d="M6 3h1M8 3h1M6 5h1M2.5 9.5v1M2.5 12v1M12.5 9h1M12.5 11.5h1M7.5 7.5h2" stroke="#10c8d8" stroke-width="1.2"/>
<path d="M8 11h1.5" stroke="#a0a0a0" stroke-width="1"/>
</svg>
<div class="tr" style="left:64px;top:767px">净高分析图</div>
<svg style="left:43px;top:795px" width="17" height="16" viewBox="0 0 17 16">
<path d="M3.3 1.2H0.8V4.5" stroke="#9a9a9a" stroke-width="1" fill="none"/>
<path d="M4.3 6V0.8H10.8" stroke="#111" stroke-width="1.4" fill="none" stroke-dasharray="2.2 0.8"/>
<path d="M10.8 0.8V5.5" stroke="#d01818" stroke-width="1.4"/><path d="M6.5 0.8h2.5" stroke="#1a1a90" stroke-width="1.4"/>
<path d="M0.8 7V14.2H5.8V6.3H0.8" stroke="#111" stroke-width="1.5" fill="none" stroke-dasharray="2.4 0.8"/>
<path d="M5.8 6.3H10.5V13.2" stroke="#111" stroke-width="1.4" fill="none" stroke-dasharray="2 0.8"/>
<path d="M10.5 6.8H15.2V13.2H10.5" stroke="#111" stroke-width="1.4" fill="none" stroke-dasharray="2 0.8"/>
<path d="M15.2 7.8V12" stroke="#1a1a90" stroke-width="1.4"/><path d="M14 6.8h1.3M0.8 7.5v1.5" stroke="#d01818" stroke-width="1.3"/>
<path d="M6 3h1M8 3h1M6 5h1M2.5 9.5v1M2.5 12v1M12.5 9h1M12.5 11.5h1M7.5 7.5h2" stroke="#10c8d8" stroke-width="1.2"/>
<path d="M8 11h1.5" stroke="#a0a0a0" stroke-width="1"/>
</svg>
<div class="tr" style="left:64px;top:791px">清单</div>
<svg style="left:9px;top:823px" width="10" height="10" viewBox="0 0 10 10"><defs></defs><rect x="0.5" y="0.5" width="8.5" height="8.5" rx="1.2" fill="#efefef" stroke="#959595" stroke-width="1"/><path d="M2.3 4.75h5" stroke="#3f5aa8" stroke-width="1.1"/></svg>
<svg style="left:25px;top:819px" width="15" height="15" viewBox="0 0 15 15">
<path d="M0.5 0.5h9l3 3v11h-12z" fill="#fafafa" stroke="#8e8e8e" stroke-width="1"/>
<rect x="0.5" y="12" width="12" height="2.5" fill="#c4c4c4"/>
<rect x="1.5" y="3" width="1.3" height="1.3" fill="#a01818"/><rect x="3.3" y="3.2" width="2.2" height="0.9" fill="#8a8a8a"/><rect x="5.4" y="3.2" width="1.6" height="0.9" fill="#209a9a"/>
<rect x="1.5" y="5" width="1.3" height="1.3" fill="#e82020"/><rect x="3.3" y="5" width="3.4" height="1.3" fill="#10107a"/>
<rect x="2" y="7.2" width="4.8" height="0.9" fill="#6a6a6a"/><rect x="2" y="9.8" width="3.5" height="0.9" fill="#9a9a9a"/>
<path d="M8.8 11.6L14 6.8" stroke="#f01414" stroke-width="1.9"/><rect x="8" y="11.2" width="1.6" height="1.6" fill="#f4ec00"/></svg>
<div class="tr" style="left:45px;top:815px">图纸集</div>
<svg style="left:43px;top:843px" width="17" height="16" viewBox="0 0 17 16">
<path d="M3.3 1.2H0.8V4.5" stroke="#9a9a9a" stroke-width="1" fill="none"/>
<path d="M4.3 6V0.8H10.8" stroke="#111" stroke-width="1.4" fill="none" stroke-dasharray="2.2 0.8"/>
<path d="M10.8 0.8V5.5" stroke="#d01818" stroke-width="1.4"/><path d="M6.5 0.8h2.5" stroke="#1a1a90" stroke-width="1.4"/>
<path d="M0.8 7V14.2H5.8V6.3H0.8" stroke="#111" stroke-width="1.5" fill="none" stroke-dasharray="2.4 0.8"/>
<path d="M5.8 6.3H10.5V13.2" stroke="#111" stroke-width="1.4" fill="none" stroke-dasharray="2 0.8"/>
<path d="M10.5 6.8H15.2V13.2H10.5" stroke="#111" stroke-width="1.4" fill="none" stroke-dasharray="2 0.8"/>
<path d="M15.2 7.8V12" stroke="#1a1a90" stroke-width="1.4"/><path d="M14 6.8h1.3M0.8 7.5v1.5" stroke="#d01818" stroke-width="1.3"/>
<path d="M6 3h1M8 3h1M6 5h1M2.5 9.5v1M2.5 12v1M12.5 9h1M12.5 11.5h1M7.5 7.5h2" stroke="#10c8d8" stroke-width="1.2"/>
<path d="M8 11h1.5" stroke="#a0a0a0" stroke-width="1"/>
</svg>
<div class="tr" style="left:64px;top:839px">默认图纸集</div>
<svg style="left:9px;top:871px" width="10" height="10" viewBox="0 0 10 10"><defs></defs><rect x="0.5" y="0.5" width="8.5" height="8.5" rx="1.2" fill="#efefef" stroke="#959595" stroke-width="1"/><path d="M2.3 4.75h5" stroke="#3f5aa8" stroke-width="1.1"/><path d="M4.75 2.3v5" stroke="#3f5aa8" stroke-width="1.1"/></svg>
<svg style="left:23px;top:866px" width="19" height="18" viewBox="0 0 19 18">
<path d="M6.3 2.8h6v4h4.7v6.2h-4.7v4.2h-6V13H1.8V6.8h4.5z" fill="#b4b4b4" stroke="#111" stroke-width="1.5" stroke-linejoin="miter"/>
<path d="M6.5 12.5l5-6 M3.5 12l2.5-3.5 M8.5 16l3.5-4 M12.5 12l3-3.5" stroke="#e4e4e4" stroke-width="0.9"/>
<rect x="6" y="0.6" width="1.3" height="1.8" fill="#10b0c0"/><rect x="11" y="0.6" width="1.3" height="1.8" fill="#10b0c0"/><rect x="7.3" y="1" width="3.7" height="1.5" fill="#222"/>
</svg>
<div class="tr" style="left:45px;top:863px">构件</div>
<svg style="left:326px;top:186px" width="787" height="779" viewBox="326 186 787 779">
<path d="M643 377H852V392H877V417H893V745H655V775H405V525H524V465H643Z" fill="#321b27"/>
<rect x="425" y="525" width="21" height="15" fill="#000"/>
<rect x="531" y="564" width="35" height="35" fill="#000"/>
<rect x="425" y="760" width="21" height="15" fill="#000"/>
<rect x="660" y="730" width="21" height="15" fill="#000"/>
<rect x="800" y="730" width="21" height="15" fill="#000"/>
<g fill="none" stroke="#d6d6d6" stroke-width="1.2">
<path d="M641.5 377V346.5H1012.5V776H656.5V835H405V776"/>
</g><g fill="none" stroke="#7a7a7a" stroke-width="1">
<path d="M644.5 377V349.5H1009.5V773H656.5"/>
<path d="M407.5 777V832.5H653.5V777"/>
</g>
<g fill="none" stroke="#e4e4e4" stroke-width="1.5" stroke-dasharray="13 0.8">
<path d="M643 377H893V745H655V775H405V525H524V465H643Z"/>
<path d="M852 377V392H877V417H893"/>
<path d="M646 465V614H774V745"/>
<path d="M530 647H774"/>
<path d="M524 564H646"/>
<path d="M531 564H566V599H531"/>
<path d="M530 564V647"/>
<path d="M577 465V564 M612 465V564 M612 508H646 M577 538H612"/>
<path d="M646 475H662V507H646 M646 508H662V531H646"/>
<path d="M690 648V672H721"/>
<path d="M531 648H554V662H531"/>
<path d="M877 527H893 M877 527V549H893"/>
<path d="M425 525V540H446V525 M660 745V730H681V745 M800 745V730H821V745 M425 775V760H446V775"/>
<path d="M526.5 467V562 M407.5 527V773"/>
<path d="M644.5 379V463 M890.5 379V743"/>
</g>
<path d="M577 485H612 M595 467V485" stroke="#c8a8b8" stroke-width="0.9" fill="none"/>
<path d="M721 648V745" stroke="#e8c8d8" stroke-width="1" fill="none"/>
<path d="M406 647H530" stroke="#e8c0d0" stroke-width="1.5"/>
<rect x="745" y="547" width="22" height="16" fill="none" stroke="#d8b0c0" stroke-width="1"/>
<path d="M656 377H678.5 M738.4 377H761 M779 377H809 M827 377H846 M854 377H872 M643 390V435.6 M893 397V416 M893 439V467.6 M893 476V504.7 M893 528V546.4 M893 680V694 M893 709V727.5 M426.5 525H444.7 M459 525H477.4 M491.5 525H521 M406 576V593 M406 617.6V645.5 M406 654V681.8 M406 706V724 M542 465H561 M586.3 465H604.7 M616.2 465H634.5 M566 577.6V594.5 M426.5 775H444.7 M452.3 775H472 M490 775H518.6 M537.5 775H560.7 M619.7 775H642 M662 745H678.4 M742 745H761 M802 745H820 M834 745H852.3 M861 745H879.5" stroke="#00e1f0" stroke-width="3" fill="none"/>
<path d="M679 377V366.0 M701 377V366.0 M679 366.0Q690.0 366.0 690.0 377 M701 366.0Q690.0 366.0 690.0 377 M716 377V366.0 M738 377V366.0 M716 366.0Q727.0 366.0 727.0 377 M738 366.0Q727.0 366.0 727.0 377 M561 775V786.0 M583 775V786.0 M561 786.0Q572.0 786.0 572.0 775 M583 786.0Q572.0 786.0 572.0 775 M597 775V786.0 M619 775V786.0 M597 786.0Q608.0 786.0 608.0 775 M619 786.0Q608.0 786.0 608.0 775 M665 647V635.5 M688 647V635.5 M665 635.5Q676.5 635.5 676.5 647 M688 635.5Q676.5 635.5 676.5 647 M646 577H635.0 M646 599H635.0 M635.0 577Q635.0 588.0 646 588.0 M635.0 599Q635.0 588.0 646 588.0 M530 619H541.0 M530 641H541.0 M541.0 619Q541.0 630.0 530 630.0 M541.0 641Q541.0 630.0 530 630.0 M774 619H762.5 M774 642H762.5 M762.5 619Q762.5 630.5 774 630.5 M762.5 642Q762.5 630.5 774 630.5" stroke="#18b8cc" stroke-width="1.4" fill="none"/>
<path d="M877 402 A9 9 0 0 1 868 393 M877 393V402 M880 526 A12 12 0 0 1 892 514 M892 514V526 M597 537 A15 15 0 0 1 612 522 M612 522V537H597 M588 562 A21 21 0 0 1 609 546 M609 546V563 M615.5 492V506 M615.5 492 A14 14 0 0 1 629.5 506 M696 648V666 A18 18 0 0 0 714 648 M681 733 A12 12 0 0 1 693 745 M800 733 A12 12 0 0 0 788 745 M425 763 A10 10 0 0 0 415 773 M425 763V774 M662 497 l4 -2.5 l-4 -2.5 l4 -2.5 l-4 -2.5 M662 524 l4 -2.5 l-4 -2.5 l4 -2.5 l-4 -2.5" stroke="#18b8cc" stroke-width="1.4" fill="none"/>
<path d="M530 487.0H576 M530 490.7H576 M530 494.4H576 M530 498.1H576 M530 501.8H576 M530 505.5H576 M530 509.2H576 M530 512.9H576 M530 516.6H576 M530 520.3H576 M530 524.0H576 M530 527.7H576 M530 531.4H576 M530 535.1H576 M530 487V564 M576 487V538 M552 487V543 M555 487V543 M530 563.5H576 M552 543H555 M722.5 667.0H767.5 M722.5 670.7H767.5 M722.5 674.4H767.5 M722.5 678.1H767.5 M722.5 681.8H767.5 M722.5 685.5H767.5 M722.5 689.2H767.5 M722.5 692.9H767.5 M722.5 696.6H767.5 M722.5 700.3H767.5 M722.5 704.0H767.5 M722.5 707.7H767.5 M722.5 711.4H767.5 M722.5 715.1H767.5 M722.5 667V745 M767.5 667V745 M744 667V723.5 M746.5 667V723.5" stroke="#e020d8" stroke-width="1" fill="none"/>
<path d="M530 507L556 500V504L531 512Z M722.5 688L744 683V686.5L722.5 692Z" fill="#e020d8"/>
<path d="M541 486V547H566V486 M733.5 661V727.5H757V661 M530.2 787V825" stroke="#30c030" stroke-width="1" fill="none"/>
<path d="M538 507l3 -3 3 3 M538 511l3 3 3 -3 M730 683l3-3 3 3 M730 687l3 3 3-3" stroke="#30c030" stroke-width="1" fill="none"/>
<g fill="none" stroke-width="1.1">
<path d="M687.5 346.5V330.4H729.4V346.5" stroke="#e8e8e8"/>
<path d="M806 346.5V330.4H848.7V346.5" stroke="#e8e8e8"/>
<path d="M925.3 346.5V330.4H966.5V346.5" stroke="#1aa0e0"/>
<path d="M450.3 525V508.5H491.5V525" stroke="#1aa0e0"/>
<path d="M533.3 465V449.3H575.7V465" stroke="#1aa0e0"/>
<path d="M450.4 835V851.5H491.5V835" stroke="#e8e8e8"/>
<path d="M569.7 835V851.5H610.4V835" stroke="#e8e8e8"/>
<path d="M724 776V792.5H766.6V776" stroke="#1aa0e0"/>
<path d="M806.3 776V792.5H848.4V776" stroke="#e8e8e8"/>
<path d="M925.3 776V792.5H966.8V776" stroke="#e8e8e8"/>
<rect x="991" y="545" width="19" height="16" stroke="#9a9a9a"/><rect x="991" y="562" width="19" height="16" stroke="#9a9a9a"/>
</g>
<path d="M704 327L709 323V327Z" fill="#20d020"/>
<path d="M823 327L828 323V327Z" fill="#20d020"/>
<path d="M942 327L947 323V327Z" fill="#20d020"/>
<path d="M461 500L466 496V500Z" fill="#20d020"/>
<path d="M549 446L554 442V446Z" fill="#20d020"/>
<path d="M467 863L472 859V863Z" fill="#20d020"/>
<path d="M586 863L591 859V863Z" fill="#20d020"/>
<path d="M742 804L747 800V804Z" fill="#20d020"/>
<path d="M823 804L828 800V804Z" fill="#20d020"/>
<path d="M943 804L948 800V804Z" fill="#20d020"/>
<path d="M411.5 775V829" stroke="#20a070" stroke-width="2"/><path d="M411.5 828.5H467" stroke="#e01010" stroke-width="2.5"/>
<path d="M406 751l5.5 5.5 5.5-5.5 M411.5 756.5V762 M478 822l10 10 M488 822l-10 10 M406 832l5-5h5" stroke="#8c8c8c" stroke-width="1.5" fill="none"/>
<g font-family="Liberation Sans">
<text x="782" y="537" font-size="6" fill="#f4f4f4" stroke="#f4f4f4" stroke-width="0.45" text-anchor="middle" font-weight="bold">阅览室</text><text x="782" y="545" font-size="6" fill="#f4f4f4" stroke="#f4f4f4" stroke-width="0.35" text-anchor="middle" font-weight="bold">317.45</text>
<text x="481" y="697" font-size="6" fill="#f4f4f4" stroke="#f4f4f4" stroke-width="0.45" text-anchor="middle" font-weight="bold">阅览室</text><text x="481" y="705" font-size="6" fill="#f4f4f4" stroke="#f4f4f4" stroke-width="0.35" text-anchor="middle" font-weight="bold">224.14</text>
<text x="632" y="618" font-size="6" fill="#f4f4f4" stroke="#f4f4f4" stroke-width="0.45" text-anchor="middle" font-weight="bold">门厅</text><text x="632" y="626" font-size="6" fill="#f4f4f4" stroke="#f4f4f4" stroke-width="0.35" text-anchor="middle" font-weight="bold">52.80</text>
<text x="556" y="501" font-size="6" fill="#f4f4f4" stroke="#f4f4f4" stroke-width="0.45" text-anchor="middle" font-weight="bold">楼梯</text><text x="556" y="509" font-size="6" fill="#f4f4f4" stroke="#f4f4f4" stroke-width="0.35" text-anchor="middle" font-weight="bold">20.21</text>
<text x="595" y="506" font-size="6" fill="#f4f4f4" stroke="#f4f4f4" stroke-width="0.45" text-anchor="middle" font-weight="bold">电梯</text><text x="595" y="514" font-size="6" fill="#f4f4f4" stroke="#f4f4f4" stroke-width="0.35" text-anchor="middle" font-weight="bold">9.07</text>
<text x="629" y="494" font-size="6" fill="#f4f4f4" stroke="#f4f4f4" stroke-width="0.45" text-anchor="middle" font-weight="bold">女卫</text><text x="629" y="502" font-size="6" fill="#f4f4f4" stroke="#f4f4f4" stroke-width="0.35" text-anchor="middle" font-weight="bold">5.40</text>
<text x="629" y="514" font-size="6" fill="#f4f4f4" stroke="#f4f4f4" stroke-width="0.45" text-anchor="middle" font-weight="bold">男卫</text><text x="629" y="522" font-size="6" fill="#f4f4f4" stroke="#f4f4f4" stroke-width="0.35" text-anchor="middle" font-weight="bold">7.90</text>
<text x="654" y="492" font-size="6" fill="#f4f4f4" stroke="#f4f4f4" stroke-width="0.45" text-anchor="middle" font-weight="bold">清洁</text><text x="654" y="500" font-size="6" fill="#f4f4f4" stroke="#f4f4f4" stroke-width="0.35" text-anchor="middle" font-weight="bold">1.80</text>
<text x="654" y="520" font-size="6" fill="#f4f4f4" stroke="#f4f4f4" stroke-width="0.45" text-anchor="middle" font-weight="bold">无障</text><text x="654" y="528" font-size="6" fill="#f4f4f4" stroke="#f4f4f4" stroke-width="0.35" text-anchor="middle" font-weight="bold">1.04</text>
<text x="542" y="654" font-size="6" fill="#f4f4f4" stroke="#f4f4f4" stroke-width="0.45" text-anchor="middle" font-weight="bold">卫</text><text x="542" y="662" font-size="6" fill="#f4f4f4" stroke="#f4f4f4" stroke-width="0.35" text-anchor="middle" font-weight="bold">0.78</text>
<text x="742" y="698" font-size="6" fill="#f4f4f4" stroke="#f4f4f4" stroke-width="0.45" text-anchor="middle" font-weight="bold">楼梯</text><text x="742" y="706" font-size="6" fill="#f4f4f4" stroke="#f4f4f4" stroke-width="0.35" text-anchor="middle" font-weight="bold">24.57</text>
<text x="756" y="555" font-size="6" fill="#f4f4f4" stroke="#f4f4f4" stroke-width="0.45" text-anchor="middle" font-weight="bold">门厅</text><text x="756" y="563" font-size="6" fill="#f4f4f4" stroke="#f4f4f4" stroke-width="0.35" text-anchor="middle" font-weight="bold">2.72</text>
<text x="885" y="540" font-size="6" fill="#f4f4f4" stroke="#f4f4f4" stroke-width="0.45" text-anchor="middle" font-weight="bold">卫</text><text x="885" y="548" font-size="6" fill="#f4f4f4" stroke="#f4f4f4" stroke-width="0.35" text-anchor="middle" font-weight="bold">0.80</text>
<text x="541" y="483" font-size="5" fill="#ddd">上</text><text x="563" y="483" font-size="5" fill="#ddd">下</text>
<text x="731" y="663" font-size="5" fill="#ddd">上</text><text x="754" y="663" font-size="5" fill="#ddd">下</text>
</g>
</svg>
<svg style="left:1123px;top:186px" width="787" height="779" viewBox="1123 186 787 779">
<path d="M1235.8 642.0 L1211.2 630.9 L1552.1 513.7 L1898.3 669.4 L1571.1 781.9 L1618.7 803.3 L1387.6 882.7 L1340.0 861.3" stroke="#a4a4a4" stroke-width="1" fill="none" />
<path d="M1237.1 641.5 L1466.9 562.5 L1763.5 695.9 L1544.8 771.1 L1569.0 782.0 L1339.2 861.0 L1137.7 770.4 L1247.1 732.8 L1198.7 711.0 L1308.1 673.4Z" stroke="#8a8a8a" stroke-width="2.4" fill="none" />
<path d="M1237.1 641.5 L1466.9 562.5 L1763.5 695.9 L1544.8 771.1 L1569.0 782.0 L1339.2 861.0 L1137.7 770.4 L1247.1 732.8 L1198.7 711.0 L1308.1 673.4Z" stroke="#eeeeee" stroke-width="0.7" fill="none" />
<path d="M1156.1 764.0 L1168.2 769.5 L1187.5 762.8 L1175.4 757.4 M1549.4 769.5 L1537.3 764.1 L1556.6 757.5 L1568.7 762.9 M1678.0 725.3 L1665.9 719.9 L1685.2 713.2 L1697.3 718.7 M1357.6 854.7 L1345.5 849.2 L1364.8 842.6 L1376.9 848.0" stroke="#8a8a8a" stroke-width="2.2" fill="none" />
<path d="M1240.5 610.5 L1279.0 597.3 L1292.0 603.1 L1253.5 616.4Z" stroke="#8a8a8a" stroke-width="1.3" fill="none" />
<path d="M1349.4 573.1 L1388.6 559.6 L1401.6 565.4 L1362.4 578.9Z" stroke="#8a8a8a" stroke-width="1.3" fill="none" />
<path d="M1459.0 535.4 L1496.9 522.4 L1509.9 528.2 L1472.0 541.2Z" stroke="#a0c8e8" stroke-width="1.3" fill="none" />
<path d="M1166.0 750.1 L1203.9 737.0 L1217.2 743.0 L1179.3 756.0Z" stroke="#a0c8e8" stroke-width="1.3" fill="none" />
<path d="M1194.6 702.4 L1233.6 689.0 L1246.2 694.7 L1207.3 708.1Z" stroke="#a0c8e8" stroke-width="1.3" fill="none" />
<path d="M1429.3 868.4 L1467.1 855.4 L1480.4 861.4 L1442.6 874.4Z" stroke="#707070" stroke-width="1.3" fill="none" />
<path d="M1538.9 830.7 L1576.3 817.8 L1589.6 823.8 L1552.2 836.7Z" stroke="#707070" stroke-width="1.3" fill="none" />
<path d="M1633.2 760.5 L1672.3 747.1 L1685.6 753.1 L1646.5 766.5Z" stroke="#80c8e8" stroke-width="1.3" fill="none" />
<path d="M1708.8 734.5 L1747.5 721.2 L1760.8 727.2 L1722.1 740.5Z" stroke="#666" stroke-width="1.3" fill="none" />
<path d="M1818.2 696.9 L1856.3 683.8 L1869.6 689.8 L1831.5 702.9Z" stroke="#666" stroke-width="1.3" fill="none" />
<path d="M1157.5 763.6 L1174.2 757.8 M1187.3 753.3 L1204.2 747.5 M1217.2 743.0 L1244.3 733.7 M1178.8 788.8 L1192.5 795.0 M1212.3 803.9 L1234.8 814.0 M1241.7 817.1 L1264.1 827.2 M1283.6 836.0 L1298.1 842.5 M1359.0 854.2 L1375.7 848.4 M1382.7 846.0 L1400.8 839.8 M1417.3 834.1 L1443.6 825.1 M1461.0 819.1 L1482.3 811.8 M1536.5 793.1 L1557.0 786.1 M1551.2 768.9 L1566.3 763.7 M1624.7 743.6 L1642.2 737.6 M1679.9 724.7 L1696.4 719.0 M1709.3 714.5 L1726.1 708.8 M1734.1 706.0 L1751.1 700.2 M1483.0 569.8 L1498.3 576.6 M1516.9 585.0 L1539.9 595.3 M1546.7 598.4 L1569.8 608.8 M1588.6 617.2 L1603.4 623.9 M1711.1 672.3 L1722.4 677.4 M1734.5 682.9 L1749.4 689.6" stroke="#3cc4cc" stroke-width="2.4" fill="none" />
<path d="M1310.8 672.5 L1430.9 726.5 M1430.9 726.5 L1548.6 686.0 M1350.9 775.1 L1575.2 698.0 M1278.5 746.9 L1390.6 708.3" stroke="#c8a0c0" stroke-width="1.6" fill="none" />
<path d="M1310.8 672.5 L1430.9 726.5 M1430.9 726.5 L1548.6 686.0 M1350.9 775.1 L1575.2 698.0 M1278.5 746.9 L1390.6 708.3" stroke="#7a7a7a" stroke-width="0.6" fill="none" />
<path d="M1529.8 714.5 L1572.1 700.0 M1536.2 717.4 L1578.5 702.9 M1542.7 720.3 L1585.0 705.8 M1549.1 723.2 L1591.4 708.7 M1555.6 726.1 L1597.8 711.6 M1562.0 729.0 L1604.3 714.5 M1568.5 731.9 L1610.7 717.4 M1574.9 734.8 L1617.2 720.3 M1581.4 737.7 L1623.6 723.2 M1587.8 740.6 L1630.1 726.1 M1594.3 743.5 L1636.5 729.0 M1600.7 746.4 L1643.0 731.9 M1528.2 713.8 L1570.4 699.2 L1648.6 734.4 L1606.4 748.9Z M1208.3 709.9 L1250.5 695.4 M1214.7 712.8 L1257.0 698.3 M1221.1 715.7 L1263.4 701.2 M1227.6 718.6 L1269.9 704.1 M1234.0 721.5 L1276.3 707.0 M1240.5 724.4 L1282.8 709.9 M1246.9 727.3 L1289.2 712.8 M1253.4 730.2 L1295.7 715.7 M1259.8 733.1 L1302.1 718.6 M1266.3 736.0 L1308.6 721.5 M1272.7 738.9 L1315.0 724.4 M1279.2 741.8 L1321.5 727.3 M1206.6 709.2 L1248.9 694.7 L1326.3 729.5 L1284.0 744.0Z" stroke="#e070e8" stroke-width="1" fill="none" />
<path d="M1548.0 714.6 L1570.0 707.1 L1624.8 731.7 L1602.8 739.3Z M1231.3 712.2 L1254.2 704.3 L1303.4 726.5 L1280.4 734.4Z" stroke="#60d060" stroke-width="1" fill="none" />
<path d="M1226 821 q10 -12 24 -4 M1470 761 q12 -10 26 -2 M1615 730 q10 -10 24 -4 M1420 770 q8 -8 18 -2" stroke="#5cd0d8" stroke-width="1.2" fill="none" />
<path d="M1456 491.8L1495.0 481L1508 488.2L1469.0 499Z" stroke="#9cc0e4" stroke-width="1" fill="none"/>
<path d="M1362 521.2L1386.75 514L1395 518.8L1370.25 526Z" stroke="#9cc0e4" stroke-width="1" fill="none"/>
<path d="M1819 649.0L1855.0 640L1867 646.0L1831.0 655Z" stroke="#9cc0e4" stroke-width="1" fill="none"/>
<path d="M1711 688.2L1747.0 678L1759 684.8L1723.0 695Z" stroke="#9cc0e4" stroke-width="1" fill="none"/>
<path d="M1635 712.0L1672.5 703L1685 709.0L1647.5 718Z" stroke="#9cc0e4" stroke-width="1" fill="none"/>
<path d="M1170 709.0L1204.5 703L1216 707.0L1181.5 713Z" stroke="#9cc0e4" stroke-width="1" fill="none"/>
<path d="M1430 844.0L1467.5 835L1480 841.0L1442.5 850Z" stroke="#9cc0e4" stroke-width="1" fill="none"/>
<path d="M1235.8 548.0 L1235.8 535.0 M1223.5 542.4 L1223.5 529.4 M1211.2 536.9 L1211.2 523.9 M1211.2 536.9 L1211.2 523.9 M1220.9 533.6 L1220.9 520.6 M1230.7 530.2 L1230.7 517.2 M1240.4 526.9 L1240.4 513.9 M1250.1 523.5 L1250.1 510.5 M1259.9 520.2 L1259.9 507.2 M1269.6 516.8 L1269.6 503.8 M1279.4 513.5 L1279.4 500.5 M1289.1 510.1 L1289.1 497.1 M1298.9 506.8 L1298.9 493.8 M1308.6 503.4 L1308.6 490.4 M1318.3 500.1 L1318.3 487.1 M1328.1 496.7 L1328.1 483.7 M1337.8 493.4 L1337.8 480.4 M1347.6 490.0 L1347.6 477.0 M1357.3 486.7 L1357.3 473.7 M1367.0 483.3 L1367.0 470.3 M1376.8 480.0 L1376.8 467.0 M1386.5 476.6 L1386.5 463.6 M1396.3 473.3 L1396.3 460.3 M1406.0 469.9 L1406.0 456.9 M1415.7 466.6 L1415.7 453.6 M1425.5 463.2 L1425.5 450.2 M1435.2 459.9 L1435.2 446.9 M1445.0 456.5 L1445.0 443.5 M1454.7 453.2 L1454.7 440.2 M1464.5 449.8 L1464.5 436.8 M1474.2 446.5 L1474.2 433.5 M1483.9 443.1 L1483.9 430.1 M1493.7 439.8 L1493.7 426.8 M1503.4 436.4 L1503.4 423.4 M1513.2 433.1 L1513.2 420.1 M1522.9 429.7 L1522.9 416.7 M1532.6 426.4 L1532.6 413.4 M1542.4 423.0 L1542.4 410.0 M1552.1 419.7 L1552.1 406.7 M1552.1 419.7 L1552.1 406.7 M1560.8 423.6 L1560.8 410.6 M1569.4 427.5 L1569.4 414.5 M1578.1 431.4 L1578.1 418.4 M1586.7 435.3 L1586.7 422.3 M1595.4 439.1 L1595.4 426.1 M1604.1 443.0 L1604.1 430.0 M1612.7 446.9 L1612.7 433.9 M1621.4 450.8 L1621.4 437.8 M1630.0 454.7 L1630.0 441.7 M1638.7 458.6 L1638.7 445.6 M1647.3 462.5 L1647.3 449.5 M1656.0 466.4 L1656.0 453.4 M1664.6 470.3 L1664.6 457.3 M1673.3 474.2 L1673.3 461.2 M1681.9 478.1 L1681.9 465.1 M1690.6 482.0 L1690.6 469.0 M1699.3 485.9 L1699.3 472.9 M1707.9 489.7 L1707.9 476.7 M1716.6 493.6 L1716.6 480.6 M1725.2 497.5 L1725.2 484.5 M1733.9 501.4 L1733.9 488.4 M1742.5 505.3 L1742.5 492.3 M1751.2 509.2 L1751.2 496.2 M1759.8 513.1 L1759.8 500.1 M1768.5 517.0 L1768.5 504.0 M1777.1 520.9 L1777.1 507.9 M1785.8 524.8 L1785.8 511.8 M1794.5 528.7 L1794.5 515.7 M1803.1 532.6 L1803.1 519.6 M1811.8 536.5 L1811.8 523.5 M1820.4 540.3 L1820.4 527.3 M1829.1 544.2 L1829.1 531.2 M1837.7 548.1 L1837.7 535.1 M1846.4 552.0 L1846.4 539.0 M1855.0 555.9 L1855.0 542.9 M1863.7 559.8 L1863.7 546.8 M1872.3 563.7 L1872.3 550.7 M1881.0 567.6 L1881.0 554.6 M1889.7 571.5 L1889.7 558.5 M1898.3 575.4 L1898.3 562.4 M1898.3 575.4 L1898.3 562.4 M1888.4 578.8 L1888.4 565.8 M1878.5 582.2 L1878.5 569.2 M1868.6 585.6 L1868.6 572.6 M1858.7 589.0 L1858.7 576.0 M1848.7 592.4 L1848.7 579.4 M1838.8 595.8 L1838.8 582.8 M1828.9 599.2 L1828.9 586.2 M1819.0 602.6 L1819.0 589.6 M1809.1 606.1 L1809.1 593.1 M1799.2 609.5 L1799.2 596.5 M1789.3 612.9 L1789.3 599.9 M1779.3 616.3 L1779.3 603.3 M1769.4 619.7 L1769.4 606.7 M1759.5 623.1 L1759.5 610.1 M1749.6 626.5 L1749.6 613.5 M1739.7 629.9 L1739.7 616.9 M1729.8 633.3 L1729.8 620.3 M1719.9 636.7 L1719.9 623.7 M1709.9 640.1 L1709.9 627.1 M1700.0 643.6 L1700.0 630.6 M1690.1 647.0 L1690.1 634.0 M1680.2 650.4 L1680.2 637.4 M1670.3 653.8 L1670.3 640.8 M1660.4 657.2 L1660.4 644.2 M1650.5 660.6 L1650.5 647.6 M1640.5 664.0 L1640.5 651.0 M1630.6 667.4 L1630.6 654.4 M1620.7 670.8 L1620.7 657.8 M1610.8 674.2 L1610.8 661.2 M1600.9 677.6 L1600.9 664.6 M1591.0 681.1 L1591.0 668.1 M1581.1 684.5 L1581.1 671.5 M1571.1 687.9 L1571.1 674.9 M1571.1 687.9 L1571.1 674.9 M1580.7 692.1 L1580.7 679.1 M1590.2 696.4 L1590.2 683.4 M1599.7 700.7 L1599.7 687.7 M1609.2 705.0 L1609.2 692.0 M1618.7 709.3 L1618.7 696.3 M1618.7 709.3 L1618.7 696.3 M1608.6 712.7 L1608.6 699.7 M1598.6 716.2 L1598.6 703.2 M1588.5 719.6 L1588.5 706.6 M1578.5 723.1 L1578.5 710.1 M1568.5 726.5 L1568.5 713.5 M1558.4 730.0 L1558.4 717.0 M1548.4 733.4 L1548.4 720.4 M1538.3 736.9 L1538.3 723.9 M1528.3 740.4 L1528.3 727.4 M1518.2 743.8 L1518.2 730.8 M1508.2 747.3 L1508.2 734.3 M1498.1 750.7 L1498.1 737.7 M1488.1 754.2 L1488.1 741.2 M1478.0 757.6 L1478.0 744.6 M1468.0 761.1 L1468.0 748.1 M1457.9 764.5 L1457.9 751.5 M1447.9 768.0 L1447.9 755.0 M1437.8 771.5 L1437.8 758.5 M1427.8 774.9 L1427.8 761.9 M1417.7 778.4 L1417.7 765.4 M1407.7 781.8 L1407.7 768.8 M1397.6 785.3 L1397.6 772.3 M1387.6 788.7 L1387.6 775.7 M1387.6 788.7 L1387.6 775.7 M1378.1 784.5 L1378.1 771.5 M1368.5 780.2 L1368.5 767.2 M1359.0 775.9 L1359.0 762.9 M1349.5 771.6 L1349.5 758.6 M1340.0 767.3 L1340.0 754.3" stroke="#b4c4d4" stroke-width="1.6" fill="none" />
<path d="M1235.8 534.0 L1211.2 522.9 L1552.1 405.7 L1898.3 561.4 L1571.1 673.9 L1618.7 695.3 L1387.6 774.7 L1340.0 753.3" stroke="#9c988a" stroke-width="3.4" fill="none" />
<path d="M1235.8 549.0 L1211.2 537.9 L1552.1 420.7 L1898.3 576.4 L1571.1 688.9 L1618.7 710.3 L1387.6 789.7 L1340.0 768.3" stroke="#a39f92" stroke-width="2.4" fill="none" />
<path d="M1235.8 536.0 L1235.8 532.0 M1235.8 551.0 L1235.8 547.0 M1223.5 530.4 L1223.5 526.4 M1223.5 545.4 L1223.5 541.4 M1211.2 524.9 L1211.2 520.9 M1211.2 539.9 L1211.2 535.9 M1211.2 524.9 L1211.2 520.9 M1211.2 539.9 L1211.2 535.9 M1220.9 521.6 L1220.9 517.6 M1220.9 536.6 L1220.9 532.6 M1230.7 518.2 L1230.7 514.2 M1230.7 533.2 L1230.7 529.2 M1240.4 514.9 L1240.4 510.9 M1240.4 529.9 L1240.4 525.9 M1250.1 511.5 L1250.1 507.5 M1250.1 526.5 L1250.1 522.5 M1259.9 508.2 L1259.9 504.2 M1259.9 523.2 L1259.9 519.2 M1269.6 504.8 L1269.6 500.8 M1269.6 519.8 L1269.6 515.8 M1279.4 501.5 L1279.4 497.5 M1279.4 516.5 L1279.4 512.5 M1289.1 498.1 L1289.1 494.1 M1289.1 513.1 L1289.1 509.1 M1298.9 494.8 L1298.9 490.8 M1298.9 509.8 L1298.9 505.8 M1308.6 491.4 L1308.6 487.4 M1308.6 506.4 L1308.6 502.4 M1318.3 488.1 L1318.3 484.1 M1318.3 503.1 L1318.3 499.1 M1328.1 484.7 L1328.1 480.7 M1328.1 499.7 L1328.1 495.7 M1337.8 481.4 L1337.8 477.4 M1337.8 496.4 L1337.8 492.4 M1347.6 478.0 L1347.6 474.0 M1347.6 493.0 L1347.6 489.0 M1357.3 474.7 L1357.3 470.7 M1357.3 489.7 L1357.3 485.7 M1367.0 471.3 L1367.0 467.3 M1367.0 486.3 L1367.0 482.3 M1376.8 468.0 L1376.8 464.0 M1376.8 483.0 L1376.8 479.0 M1386.5 464.6 L1386.5 460.6 M1386.5 479.6 L1386.5 475.6 M1396.3 461.3 L1396.3 457.3 M1396.3 476.3 L1396.3 472.3 M1406.0 457.9 L1406.0 453.9 M1406.0 472.9 L1406.0 468.9 M1415.7 454.6 L1415.7 450.6 M1415.7 469.6 L1415.7 465.6 M1425.5 451.2 L1425.5 447.2 M1425.5 466.2 L1425.5 462.2 M1435.2 447.9 L1435.2 443.9 M1435.2 462.9 L1435.2 458.9 M1445.0 444.5 L1445.0 440.5 M1445.0 459.5 L1445.0 455.5 M1454.7 441.2 L1454.7 437.2 M1454.7 456.2 L1454.7 452.2 M1464.5 437.8 L1464.5 433.8 M1464.5 452.8 L1464.5 448.8 M1474.2 434.5 L1474.2 430.5 M1474.2 449.5 L1474.2 445.5 M1483.9 431.1 L1483.9 427.1 M1483.9 446.1 L1483.9 442.1 M1493.7 427.8 L1493.7 423.8 M1493.7 442.8 L1493.7 438.8 M1503.4 424.4 L1503.4 420.4 M1503.4 439.4 L1503.4 435.4 M1513.2 421.1 L1513.2 417.1 M1513.2 436.1 L1513.2 432.1 M1522.9 417.7 L1522.9 413.7 M1522.9 432.7 L1522.9 428.7 M1532.6 414.4 L1532.6 410.4 M1532.6 429.4 L1532.6 425.4 M1542.4 411.0 L1542.4 407.0 M1542.4 426.0 L1542.4 422.0 M1552.1 407.7 L1552.1 403.7 M1552.1 422.7 L1552.1 418.7 M1552.1 407.7 L1552.1 403.7 M1552.1 422.7 L1552.1 418.7 M1560.8 411.6 L1560.8 407.6 M1560.8 426.6 L1560.8 422.6 M1569.4 415.5 L1569.4 411.5 M1569.4 430.5 L1569.4 426.5 M1578.1 419.4 L1578.1 415.4 M1578.1 434.4 L1578.1 430.4 M1586.7 423.3 L1586.7 419.3 M1586.7 438.3 L1586.7 434.3 M1595.4 427.1 L1595.4 423.1 M1595.4 442.1 L1595.4 438.1 M1604.1 431.0 L1604.1 427.0 M1604.1 446.0 L1604.1 442.0 M1612.7 434.9 L1612.7 430.9 M1612.7 449.9 L1612.7 445.9 M1621.4 438.8 L1621.4 434.8 M1621.4 453.8 L1621.4 449.8 M1630.0 442.7 L1630.0 438.7 M1630.0 457.7 L1630.0 453.7 M1638.7 446.6 L1638.7 442.6 M1638.7 461.6 L1638.7 457.6 M1647.3 450.5 L1647.3 446.5 M1647.3 465.5 L1647.3 461.5 M1656.0 454.4 L1656.0 450.4 M1656.0 469.4 L1656.0 465.4 M1664.6 458.3 L1664.6 454.3 M1664.6 473.3 L1664.6 469.3 M1673.3 462.2 L1673.3 458.2 M1673.3 477.2 L1673.3 473.2 M1681.9 466.1 L1681.9 462.1 M1681.9 481.1 L1681.9 477.1 M1690.6 470.0 L1690.6 466.0 M1690.6 485.0 L1690.6 481.0 M1699.3 473.9 L1699.3 469.9 M1699.3 488.9 L1699.3 484.9 M1707.9 477.7 L1707.9 473.7 M1707.9 492.7 L1707.9 488.7 M1716.6 481.6 L1716.6 477.6 M1716.6 496.6 L1716.6 492.6 M1725.2 485.5 L1725.2 481.5 M1725.2 500.5 L1725.2 496.5 M1733.9 489.4 L1733.9 485.4 M1733.9 504.4 L1733.9 500.4 M1742.5 493.3 L1742.5 489.3 M1742.5 508.3 L1742.5 504.3 M1751.2 497.2 L1751.2 493.2 M1751.2 512.2 L1751.2 508.2 M1759.8 501.1 L1759.8 497.1 M1759.8 516.1 L1759.8 512.1 M1768.5 505.0 L1768.5 501.0 M1768.5 520.0 L1768.5 516.0 M1777.1 508.9 L1777.1 504.9 M1777.1 523.9 L1777.1 519.9 M1785.8 512.8 L1785.8 508.8 M1785.8 527.8 L1785.8 523.8 M1794.5 516.7 L1794.5 512.7 M1794.5 531.7 L1794.5 527.7 M1803.1 520.6 L1803.1 516.6 M1803.1 535.6 L1803.1 531.6 M1811.8 524.5 L1811.8 520.5 M1811.8 539.5 L1811.8 535.5 M1820.4 528.3 L1820.4 524.3 M1820.4 543.3 L1820.4 539.3 M1829.1 532.2 L1829.1 528.2 M1829.1 547.2 L1829.1 543.2 M1837.7 536.1 L1837.7 532.1 M1837.7 551.1 L1837.7 547.1 M1846.4 540.0 L1846.4 536.0 M1846.4 555.0 L1846.4 551.0 M1855.0 543.9 L1855.0 539.9 M1855.0 558.9 L1855.0 554.9 M1863.7 547.8 L1863.7 543.8 M1863.7 562.8 L1863.7 558.8 M1872.3 551.7 L1872.3 547.7 M1872.3 566.7 L1872.3 562.7 M1881.0 555.6 L1881.0 551.6 M1881.0 570.6 L1881.0 566.6 M1889.7 559.5 L1889.7 555.5 M1889.7 574.5 L1889.7 570.5 M1898.3 563.4 L1898.3 559.4 M1898.3 578.4 L1898.3 574.4 M1898.3 563.4 L1898.3 559.4 M1898.3 578.4 L1898.3 574.4 M1888.4 566.8 L1888.4 562.8 M1888.4 581.8 L1888.4 577.8 M1878.5 570.2 L1878.5 566.2 M1878.5 585.2 L1878.5 581.2 M1868.6 573.6 L1868.6 569.6 M1868.6 588.6 L1868.6 584.6 M1858.7 577.0 L1858.7 573.0 M1858.7 592.0 L1858.7 588.0 M1848.7 580.4 L1848.7 576.4 M1848.7 595.4 L1848.7 591.4 M1838.8 583.8 L1838.8 579.8 M1838.8 598.8 L1838.8 594.8 M1828.9 587.2 L1828.9 583.2 M1828.9 602.2 L1828.9 598.2 M1819.0 590.6 L1819.0 586.6 M1819.0 605.6 L1819.0 601.6 M1809.1 594.1 L1809.1 590.1 M1809.1 609.1 L1809.1 605.1 M1799.2 597.5 L1799.2 593.5 M1799.2 612.5 L1799.2 608.5 M1789.3 600.9 L1789.3 596.9 M1789.3 615.9 L1789.3 611.9 M1779.3 604.3 L1779.3 600.3 M1779.3 619.3 L1779.3 615.3 M1769.4 607.7 L1769.4 603.7 M1769.4 622.7 L1769.4 618.7 M1759.5 611.1 L1759.5 607.1 M1759.5 626.1 L1759.5 622.1 M1749.6 614.5 L1749.6 610.5 M1749.6 629.5 L1749.6 625.5 M1739.7 617.9 L1739.7 613.9 M1739.7 632.9 L1739.7 628.9 M1729.8 621.3 L1729.8 617.3 M1729.8 636.3 L1729.8 632.3 M1719.9 624.7 L1719.9 620.7 M1719.9 639.7 L1719.9 635.7 M1709.9 628.1 L1709.9 624.1 M1709.9 643.1 L1709.9 639.1 M1700.0 631.6 L1700.0 627.6 M1700.0 646.6 L1700.0 642.6 M1690.1 635.0 L1690.1 631.0 M1690.1 650.0 L1690.1 646.0 M1680.2 638.4 L1680.2 634.4 M1680.2 653.4 L1680.2 649.4 M1670.3 641.8 L1670.3 637.8 M1670.3 656.8 L1670.3 652.8 M1660.4 645.2 L1660.4 641.2 M1660.4 660.2 L1660.4 656.2 M1650.5 648.6 L1650.5 644.6 M1650.5 663.6 L1650.5 659.6 M1640.5 652.0 L1640.5 648.0 M1640.5 667.0 L1640.5 663.0 M1630.6 655.4 L1630.6 651.4 M1630.6 670.4 L1630.6 666.4 M1620.7 658.8 L1620.7 654.8 M1620.7 673.8 L1620.7 669.8 M1610.8 662.2 L1610.8 658.2 M1610.8 677.2 L1610.8 673.2 M1600.9 665.6 L1600.9 661.6 M1600.9 680.6 L1600.9 676.6 M1591.0 669.1 L1591.0 665.1 M1591.0 684.1 L1591.0 680.1 M1581.1 672.5 L1581.1 668.5 M1581.1 687.5 L1581.1 683.5 M1571.1 675.9 L1571.1 671.9 M1571.1 690.9 L1571.1 686.9 M1571.1 675.9 L1571.1 671.9 M1571.1 690.9 L1571.1 686.9 M1580.7 680.1 L1580.7 676.1 M1580.7 695.1 L1580.7 691.1 M1590.2 684.4 L1590.2 680.4 M1590.2 699.4 L1590.2 695.4 M1599.7 688.7 L1599.7 684.7 M1599.7 703.7 L1599.7 699.7 M1609.2 693.0 L1609.2 689.0 M1609.2 708.0 L1609.2 704.0 M1618.7 697.3 L1618.7 693.3 M1618.7 712.3 L1618.7 708.3 M1618.7 697.3 L1618.7 693.3 M1618.7 712.3 L1618.7 708.3 M1608.6 700.7 L1608.6 696.7 M1608.6 715.7 L1608.6 711.7 M1598.6 704.2 L1598.6 700.2 M1598.6 719.2 L1598.6 715.2 M1588.5 707.6 L1588.5 703.6 M1588.5 722.6 L1588.5 718.6 M1578.5 711.1 L1578.5 707.1 M1578.5 726.1 L1578.5 722.1 M1568.5 714.5 L1568.5 710.5 M1568.5 729.5 L1568.5 725.5 M1558.4 718.0 L1558.4 714.0 M1558.4 733.0 L1558.4 729.0 M1548.4 721.4 L1548.4 717.4 M1548.4 736.4 L1548.4 732.4 M1538.3 724.9 L1538.3 720.9 M1538.3 739.9 L1538.3 735.9 M1528.3 728.4 L1528.3 724.4 M1528.3 743.4 L1528.3 739.4 M1518.2 731.8 L1518.2 727.8 M1518.2 746.8 L1518.2 742.8 M1508.2 735.3 L1508.2 731.3 M1508.2 750.3 L1508.2 746.3 M1498.1 738.7 L1498.1 734.7 M1498.1 753.7 L1498.1 749.7 M1488.1 742.2 L1488.1 738.2 M1488.1 757.2 L1488.1 753.2 M1478.0 745.6 L1478.0 741.6 M1478.0 760.6 L1478.0 756.6 M1468.0 749.1 L1468.0 745.1 M1468.0 764.1 L1468.0 760.1 M1457.9 752.5 L1457.9 748.5 M1457.9 767.5 L1457.9 763.5 M1447.9 756.0 L1447.9 752.0 M1447.9 771.0 L1447.9 767.0 M1437.8 759.5 L1437.8 755.5 M1437.8 774.5 L1437.8 770.5 M1427.8 762.9 L1427.8 758.9 M1427.8 777.9 L1427.8 773.9 M1417.7 766.4 L1417.7 762.4 M1417.7 781.4 L1417.7 777.4 M1407.7 769.8 L1407.7 765.8 M1407.7 784.8 L1407.7 780.8 M1397.6 773.3 L1397.6 769.3 M1397.6 788.3 L1397.6 784.3 M1387.6 776.7 L1387.6 772.7 M1387.6 791.7 L1387.6 787.7 M1387.6 776.7 L1387.6 772.7 M1387.6 791.7 L1387.6 787.7 M1378.1 772.5 L1378.1 768.5 M1378.1 787.5 L1378.1 783.5 M1368.5 768.2 L1368.5 764.2 M1368.5 783.2 L1368.5 779.2 M1359.0 763.9 L1359.0 759.9 M1359.0 778.9 L1359.0 774.9 M1349.5 759.6 L1349.5 755.6 M1349.5 774.6 L1349.5 770.6 M1340.0 755.3 L1340.0 751.3 M1340.0 770.3 L1340.0 766.3" stroke="#8e8a7e" stroke-width="2.2" fill="none" />
<path d="M1235.8 533.5 L1211.2 522.4 L1552.1 405.2 L1898.3 560.9 L1571.1 673.4 L1618.7 694.8 L1387.6 774.2 L1340.0 752.8" stroke="#d6d2c8" stroke-width="0.8" fill="none" />
<path d="M1237.1 488.0 L1466.9 409.0 L1763.5 542.4 L1544.8 617.6 L1569.0 628.5 L1339.2 707.5 L1137.7 616.9 L1247.1 579.3 L1198.7 557.5 L1308.1 519.9Z" stroke="#cf7c6c" stroke-width="1.1" fill="none" />
<path d="M1237.1 550.5 L1466.9 471.5 L1763.5 604.9 L1544.8 680.1 L1569.0 691.0 L1339.2 770.0 L1137.7 679.4 L1247.1 641.8 L1198.7 620.0 L1308.1 582.4Z" stroke="#cf7c6c" stroke-width="1.1" fill="none" />
<path d="M1242.3 488.1 L1466.6 411.0 L1758.3 542.3 L1539.6 617.5 L1563.8 628.3 L1339.5 705.4 L1142.9 617.0 L1252.2 579.4 L1203.9 557.6 L1313.2 520.0Z" stroke="#cf7c6c" stroke-width="1.1" fill="none" />
<path d="M1242.3 550.6 L1466.6 473.5 L1758.3 604.8 L1539.6 680.0 L1563.8 690.8 L1339.5 767.9 L1142.9 679.5 L1252.2 641.9 L1203.9 620.1 L1313.2 582.5Z" stroke="#cf7c6c" stroke-width="1.1" fill="none" />
<path d="M1237.1 550.5 L1237.1 488.0 M1466.9 471.5 L1466.9 409.0 M1763.5 604.9 L1763.5 542.4 M1544.8 680.1 L1544.8 617.6 M1569.0 691.0 L1569.0 628.5 M1339.2 770.0 L1339.2 707.5 M1137.7 679.4 L1137.7 616.9 M1247.1 641.8 L1247.1 579.3 M1198.7 620.0 L1198.7 557.5 M1308.1 582.4 L1308.1 519.9 M1242.3 550.6 L1242.3 488.1 M1466.6 473.5 L1466.6 411.0 M1758.3 604.8 L1758.3 542.3 M1539.6 680.0 L1539.6 617.5 M1563.8 690.8 L1563.8 628.3 M1339.5 767.9 L1339.5 705.4 M1142.9 679.5 L1142.9 617.0 M1252.2 641.9 L1252.2 579.4 M1203.9 620.1 L1203.9 557.6 M1313.2 582.5 L1313.2 520.0" stroke="#cf7c6c" stroke-width="1.2" fill="none" />
<path d="M1249.1 543.4 L1290.4 529.2 L1290.4 474.2 L1249.1 488.4Z M1250.7 542.8 L1250.7 487.8 M1288.8 529.7 L1288.8 474.7" stroke="#cf7c6c" stroke-width="1.2" fill="none" /><path d="M1253.2 539.0 L1286.3 527.6 L1286.3 478.6 L1253.2 490.0Z M1264.3 535.2 L1264.3 486.2 M1275.3 531.4 L1275.3 482.4 M1253.2 500.0 L1286.3 488.6" stroke="#aab4c4" stroke-width="1.3" fill="none" /><path d="M1253.2 539.0 L1286.3 527.6 L1286.3 478.6 L1253.2 490.0Z M1264.3 535.2 L1264.3 486.2 M1275.3 531.4 L1275.3 482.4 M1253.2 500.0 L1286.3 488.6" stroke="#eef0f4" stroke-width="0.4" fill="none" /><path d="M1260.3 500.6 L1255.3 518.8 L1260.3 533.6 M1263.6 499.4 L1268.5 514.2 L1263.6 532.4 M1276.0 495.1 L1271.0 513.4 L1276.0 528.1 M1279.3 494.0 L1284.2 508.8 L1279.3 527.0" stroke="#45666a" stroke-width="1.6" fill="none" />
<path d="M1304.2 524.4 L1345.6 510.2 L1345.6 455.2 L1304.2 469.4Z M1305.9 523.9 L1305.9 468.9 M1343.9 510.8 L1343.9 455.8" stroke="#cf7c6c" stroke-width="1.2" fill="none" /><path d="M1308.4 520.0 L1341.4 508.6 L1341.4 459.6 L1308.4 471.0Z M1319.4 516.2 L1319.4 467.2 M1330.4 512.4 L1330.4 463.4 M1308.4 481.0 L1341.4 469.6" stroke="#aab4c4" stroke-width="1.3" fill="none" /><path d="M1308.4 520.0 L1341.4 508.6 L1341.4 459.6 L1308.4 471.0Z M1319.4 516.2 L1319.4 467.2 M1330.4 512.4 L1330.4 463.4 M1308.4 481.0 L1341.4 469.6" stroke="#eef0f4" stroke-width="0.4" fill="none" /><path d="M1315.4 481.6 L1310.4 499.8 L1315.4 514.6 M1318.7 480.5 L1323.7 495.2 L1318.7 513.5 M1331.1 476.2 L1326.1 494.4 L1331.1 509.2 M1334.4 475.1 L1339.4 489.8 L1334.4 508.1" stroke="#45666a" stroke-width="1.6" fill="none" />
<path d="M1362.1 504.5 L1389.7 495.0 L1389.7 440.0 L1362.1 449.5Z M1363.2 504.1 L1363.2 449.1 M1388.6 495.4 L1388.6 440.4" stroke="#cf7c6c" stroke-width="1.2" fill="none" /><path d="M1364.9 500.6 L1386.9 493.0 L1386.9 444.0 L1364.9 451.6Z M1372.2 498.0 L1372.2 449.0 M1379.6 495.5 L1379.6 446.5 M1364.9 461.6 L1386.9 454.0" stroke="#aab4c4" stroke-width="1.3" fill="none" /><path d="M1364.9 500.6 L1386.9 493.0 L1386.9 444.0 L1364.9 451.6Z M1372.2 498.0 L1372.2 449.0 M1379.6 495.5 L1379.6 446.5 M1364.9 461.6 L1386.9 454.0" stroke="#eef0f4" stroke-width="0.4" fill="none" /><path d="M1374.8 461.2 L1366.3 480.6 L1374.8 494.2 M1377.0 460.4 L1385.6 474.0 L1377.0 493.4" stroke="#45666a" stroke-width="1.6" fill="none" />
<path d="M1406.2 489.4 L1423.7 483.4 L1423.7 428.4 L1406.2 434.4Z M1406.9 489.1 L1406.9 434.1 M1423.0 483.6 L1423.0 428.6" stroke="#cf7c6c" stroke-width="1.2" fill="none" /><path d="M1408.0 485.8 L1422.0 481.0 L1422.0 432.0 L1408.0 436.8Z M1412.6 484.2 L1412.6 435.2 M1417.3 482.6 L1417.3 433.6 M1408.0 446.8 L1422.0 442.0" stroke="#aab4c4" stroke-width="1.3" fill="none" /><path d="M1408.0 485.8 L1422.0 481.0 L1422.0 432.0 L1408.0 436.8Z M1412.6 484.2 L1412.6 435.2 M1417.3 482.6 L1417.3 433.6 M1408.0 446.8 L1422.0 442.0" stroke="#eef0f4" stroke-width="0.4" fill="none" /><path d="M1414.3 447.6 L1408.9 466.0 L1414.3 480.6 M1415.7 447.1 L1421.1 461.8 L1415.7 480.1" stroke="#45666a" stroke-width="1.6" fill="none" />
<path d="M1247.6 552.2 L1284.4 568.7 L1284.4 513.7 L1247.6 497.2Z M1249.1 552.9 L1249.1 497.9 M1282.9 568.1 L1282.9 513.1" stroke="#cf7c6c" stroke-width="1.2" fill="none" /><path d="M1251.3 550.9 L1280.7 564.1 L1280.7 515.1 L1251.3 501.9Z M1261.1 555.3 L1261.1 506.3 M1270.9 559.7 L1270.9 510.7 M1251.3 511.9 L1280.7 525.1" stroke="#aab4c4" stroke-width="1.3" fill="none" /><path d="M1251.3 550.9 L1280.7 564.1 L1280.7 515.1 L1251.3 501.9Z M1261.1 555.3 L1261.1 506.3 M1270.9 559.7 L1270.9 510.7 M1251.3 511.9 L1280.7 525.1" stroke="#eef0f4" stroke-width="0.4" fill="none" /><path d="M1257.5 517.7 L1253.1 532.2 L1257.5 550.7 M1260.5 519.0 L1264.9 537.5 L1260.5 552.0 M1271.5 524.0 L1267.1 538.5 L1271.5 557.0 M1274.5 525.3 L1278.9 543.8 L1274.5 558.3" stroke="#45666a" stroke-width="1.6" fill="none" />
<path d="M1514.4 489.9 L1540.2 501.5 L1540.2 446.5 L1514.4 434.9Z M1515.5 490.4 L1515.5 435.4 M1539.2 501.0 L1539.2 446.0" stroke="#cf7c6c" stroke-width="1.2" fill="none" /><path d="M1517.0 488.0 L1537.7 497.3 L1537.7 448.3 L1517.0 439.0Z M1523.9 491.1 L1523.9 442.1 M1530.8 494.2 L1530.8 445.2 M1517.0 449.0 L1537.7 458.3" stroke="#aab4c4" stroke-width="1.3" fill="none" /><path d="M1517.0 488.0 L1537.7 497.3 L1537.7 448.3 L1517.0 439.0Z M1523.9 491.1 L1523.9 442.1 M1530.8 494.2 L1530.8 445.2 M1517.0 449.0 L1537.7 458.3" stroke="#eef0f4" stroke-width="0.4" fill="none" /><path d="M1526.3 456.2 L1518.3 469.1 L1526.3 489.2 M1528.4 457.2 L1536.4 477.2 L1528.4 490.2" stroke="#45666a" stroke-width="1.6" fill="none" />
<path d="M1546.7 504.4 L1570.1 514.9 L1570.1 459.9 L1546.7 449.4Z M1547.6 504.8 L1547.6 449.8 M1569.1 514.5 L1569.1 459.5" stroke="#cf7c6c" stroke-width="1.2" fill="none" /><path d="M1549.0 502.4 L1567.7 510.8 L1567.7 461.8 L1549.0 453.4Z M1555.3 505.2 L1555.3 456.2 M1561.5 508.0 L1561.5 459.0 M1549.0 463.4 L1567.7 471.8" stroke="#aab4c4" stroke-width="1.3" fill="none" /><path d="M1549.0 502.4 L1567.7 510.8 L1567.7 461.8 L1549.0 453.4Z M1555.3 505.2 L1555.3 456.2 M1561.5 508.0 L1561.5 459.0 M1549.0 463.4 L1567.7 471.8" stroke="#eef0f4" stroke-width="0.4" fill="none" /><path d="M1557.4 470.2 L1550.2 483.5 L1557.4 503.2 M1559.3 471.1 L1566.6 490.8 L1559.3 504.1" stroke="#45666a" stroke-width="1.6" fill="none" />
<path d="M1711.1 578.3 L1722.4 583.4 L1722.4 528.4 L1711.1 523.3Z M1711.6 578.5 L1711.6 523.5 M1721.9 583.2 L1721.9 528.2" stroke="#cf7c6c" stroke-width="1.2" fill="none" /><path d="M1712.2 575.8 L1721.3 579.9 L1721.3 530.9 L1712.2 526.8Z M1715.2 577.2 L1715.2 528.2 M1718.3 578.6 L1718.3 529.6 M1712.2 536.8 L1721.3 540.9" stroke="#aab4c4" stroke-width="1.3" fill="none" /><path d="M1712.2 575.8 L1721.3 579.9 L1721.3 530.9 L1712.2 526.8Z M1715.2 577.2 L1715.2 528.2 M1718.3 578.6 L1718.3 529.6 M1712.2 536.8 L1721.3 540.9" stroke="#eef0f4" stroke-width="0.4" fill="none" /><path d="M1716.3 541.7 L1712.8 556.6 L1716.3 574.7 M1717.2 542.1 L1720.7 560.2 L1717.2 575.1" stroke="#45666a" stroke-width="1.6" fill="none" />
<path d="M1734.5 588.9 L1749.4 595.6 L1749.4 540.6 L1734.5 533.9Z M1735.1 589.1 L1735.1 534.1 M1748.8 595.3 L1748.8 540.3" stroke="#cf7c6c" stroke-width="1.2" fill="none" /><path d="M1736.0 586.5 L1747.9 591.9 L1747.9 542.9 L1736.0 537.5Z M1740.0 588.3 L1740.0 539.3 M1743.9 590.1 L1743.9 541.1 M1736.0 547.5 L1747.9 552.9" stroke="#aab4c4" stroke-width="1.3" fill="none" /><path d="M1736.0 586.5 L1747.9 591.9 L1747.9 542.9 L1736.0 537.5Z M1740.0 588.3 L1740.0 539.3 M1743.9 590.1 L1743.9 541.1 M1736.0 547.5 L1747.9 552.9" stroke="#eef0f4" stroke-width="0.4" fill="none" /><path d="M1741.3 552.9 L1736.7 567.4 L1741.3 585.9 M1742.5 553.5 L1747.2 572.1 L1742.5 586.5" stroke="#45666a" stroke-width="1.6" fill="none" />
<path d="M1157.5 669.6 L1174.2 663.8 L1174.2 608.8 L1157.5 614.6Z M1158.1 669.3 L1158.1 614.3 M1173.5 664.0 L1173.5 609.0" stroke="#cf7c6c" stroke-width="1.2" fill="none" /><path d="M1159.1 666.0 L1172.5 661.4 L1172.5 612.4 L1159.1 617.0Z M1163.6 664.5 L1163.6 615.5 M1168.1 662.9 L1168.1 613.9 M1159.1 627.0 L1172.5 622.4" stroke="#aab4c4" stroke-width="1.3" fill="none" /><path d="M1159.1 666.0 L1172.5 661.4 L1172.5 612.4 L1159.1 617.0Z M1163.6 664.5 L1163.6 615.5 M1168.1 662.9 L1168.1 613.9 M1159.1 627.0 L1172.5 622.4" stroke="#eef0f4" stroke-width="0.4" fill="none" /><path d="M1165.2 627.9 L1160.0 646.2 L1165.2 660.9 M1166.5 627.5 L1171.7 642.2 L1166.5 660.5" stroke="#45666a" stroke-width="1.6" fill="none" />
<path d="M1187.3 659.3 L1204.2 653.5 L1204.2 598.5 L1187.3 604.3Z M1188.0 659.1 L1188.0 604.1 M1203.6 653.7 L1203.6 598.7" stroke="#cf7c6c" stroke-width="1.2" fill="none" /><path d="M1189.0 655.7 L1202.6 651.1 L1202.6 602.1 L1189.0 606.7Z M1193.5 654.2 L1193.5 605.2 M1198.0 652.6 L1198.0 603.6 M1189.0 616.7 L1202.6 612.1" stroke="#aab4c4" stroke-width="1.3" fill="none" /><path d="M1189.0 655.7 L1202.6 651.1 L1202.6 602.1 L1189.0 606.7Z M1193.5 654.2 L1193.5 605.2 M1198.0 652.6 L1198.0 603.6 M1189.0 616.7 L1202.6 612.1" stroke="#eef0f4" stroke-width="0.4" fill="none" /><path d="M1195.1 617.6 L1189.9 635.9 L1195.1 650.6 M1196.5 617.2 L1201.7 631.9 L1196.5 650.2" stroke="#45666a" stroke-width="1.6" fill="none" />
<path d="M1217.2 649.0 L1244.3 639.7 L1244.3 584.7 L1217.2 594.0Z M1218.3 648.7 L1218.3 593.7 M1243.2 640.1 L1243.2 585.1" stroke="#cf7c6c" stroke-width="1.2" fill="none" /><path d="M1219.9 645.1 L1241.6 637.6 L1241.6 588.6 L1219.9 596.1Z M1227.1 642.6 L1227.1 593.6 M1234.4 640.1 L1234.4 591.1 M1219.9 606.1 L1241.6 598.6" stroke="#aab4c4" stroke-width="1.3" fill="none" /><path d="M1219.9 645.1 L1241.6 637.6 L1241.6 588.6 L1219.9 596.1Z M1227.1 642.6 L1227.1 593.6 M1234.4 640.1 L1234.4 591.1 M1219.9 606.1 L1241.6 598.6" stroke="#eef0f4" stroke-width="0.4" fill="none" /><path d="M1229.7 605.7 L1221.3 625.1 L1229.7 638.7 M1231.8 605.0 L1240.2 618.6 L1231.8 638.0" stroke="#45666a" stroke-width="1.6" fill="none" />
<path d="M1178.8 694.8 L1192.5 701.0 L1192.5 646.0 L1178.8 639.8Z M1179.4 695.1 L1179.4 640.1 M1192.0 700.8 L1192.0 645.8" stroke="#cf7c6c" stroke-width="1.2" fill="none" /><path d="M1180.2 692.5 L1191.1 697.4 L1191.1 648.4 L1180.2 643.5Z M1183.8 694.1 L1183.8 645.1 M1187.5 695.7 L1187.5 646.7 M1180.2 653.5 L1191.1 658.4" stroke="#aab4c4" stroke-width="1.3" fill="none" /><path d="M1180.2 692.5 L1191.1 697.4 L1191.1 648.4 L1180.2 643.5Z M1183.8 694.1 L1183.8 645.1 M1187.5 695.7 L1187.5 646.7 M1180.2 653.5 L1191.1 658.4" stroke="#eef0f4" stroke-width="0.4" fill="none" /><path d="M1185.1 658.7 L1180.9 673.3 L1185.1 691.7 M1186.2 659.2 L1190.5 677.6 L1186.2 692.2" stroke="#45666a" stroke-width="1.6" fill="none" />
<path d="M1212.3 709.9 L1234.8 720.0 L1234.8 665.0 L1212.3 654.9Z M1213.2 710.3 L1213.2 655.3 M1233.9 719.6 L1233.9 664.6" stroke="#cf7c6c" stroke-width="1.2" fill="none" /><path d="M1214.6 707.9 L1232.6 716.0 L1232.6 667.0 L1214.6 658.9Z M1220.6 710.6 L1220.6 661.6 M1226.6 713.3 L1226.6 664.3 M1214.6 668.9 L1232.6 677.0" stroke="#aab4c4" stroke-width="1.3" fill="none" /><path d="M1214.6 707.9 L1232.6 716.0 L1232.6 667.0 L1214.6 658.9Z M1220.6 710.6 L1220.6 661.6 M1226.6 713.3 L1226.6 664.3 M1214.6 668.9 L1232.6 677.0" stroke="#eef0f4" stroke-width="0.4" fill="none" /><path d="M1222.7 675.6 L1215.7 688.9 L1222.7 708.6 M1224.5 676.4 L1231.5 696.0 L1224.5 709.4" stroke="#45666a" stroke-width="1.6" fill="none" />
<path d="M1241.7 723.1 L1264.1 733.2 L1264.1 678.2 L1241.7 668.1Z M1242.6 723.5 L1242.6 668.5 M1263.2 732.8 L1263.2 677.8" stroke="#cf7c6c" stroke-width="1.2" fill="none" /><path d="M1243.9 721.1 L1261.8 729.2 L1261.8 680.2 L1243.9 672.1Z M1249.9 723.8 L1249.9 674.8 M1255.9 726.5 L1255.9 677.5 M1243.9 682.1 L1261.8 690.2" stroke="#aab4c4" stroke-width="1.3" fill="none" /><path d="M1243.9 721.1 L1261.8 729.2 L1261.8 680.2 L1243.9 672.1Z M1249.9 723.8 L1249.9 674.8 M1255.9 726.5 L1255.9 677.5 M1243.9 682.1 L1261.8 690.2" stroke="#eef0f4" stroke-width="0.4" fill="none" /><path d="M1252.0 688.8 L1245.0 702.1 L1252.0 721.8 M1253.8 689.6 L1260.7 709.2 L1253.8 722.6" stroke="#45666a" stroke-width="1.6" fill="none" />
<path d="M1283.6 742.0 L1298.1 748.5 L1298.1 693.5 L1283.6 687.0Z M1284.2 742.2 L1284.2 687.2 M1297.5 748.2 L1297.5 693.2" stroke="#cf7c6c" stroke-width="1.2" fill="none" /><path d="M1285.0 739.6 L1296.7 744.8 L1296.7 695.8 L1285.0 690.6Z M1288.9 741.4 L1288.9 692.4 M1292.8 743.1 L1292.8 694.1 M1285.0 700.6 L1296.7 705.8" stroke="#aab4c4" stroke-width="1.3" fill="none" /><path d="M1285.0 739.6 L1296.7 744.8 L1296.7 695.8 L1285.0 690.6Z M1288.9 741.4 L1288.9 692.4 M1292.8 743.1 L1292.8 694.1 M1285.0 700.6 L1296.7 705.8" stroke="#eef0f4" stroke-width="0.4" fill="none" /><path d="M1290.3 706.0 L1285.8 720.4 L1290.3 739.0 M1291.4 706.5 L1295.9 725.0 L1291.4 739.5" stroke="#45666a" stroke-width="1.6" fill="none" />
<path d="M1215.3 611.3 L1232.7 605.3 L1232.7 550.3 L1215.3 556.3Z M1215.9 611.1 L1215.9 556.1 M1232.0 605.6 L1232.0 550.6" stroke="#cf7c6c" stroke-width="1.2" fill="none" /><path d="M1217.0 607.7 L1231.0 602.9 L1231.0 553.9 L1217.0 558.7Z M1221.7 606.1 L1221.7 557.1 M1226.3 604.5 L1226.3 555.5 M1217.0 568.7 L1231.0 563.9" stroke="#aab4c4" stroke-width="1.3" fill="none" /><path d="M1217.0 607.7 L1231.0 602.9 L1231.0 553.9 L1217.0 558.7Z M1221.7 606.1 L1221.7 557.1 M1226.3 604.5 L1226.3 555.5 M1217.0 568.7 L1231.0 563.9" stroke="#eef0f4" stroke-width="0.4" fill="none" /><path d="M1223.3 569.6 L1217.9 587.9 L1223.3 602.6 M1224.7 569.1 L1230.1 583.7 L1224.7 602.1" stroke="#45666a" stroke-width="1.6" fill="none" />
<path d="M1256.0 597.3 L1272.9 591.5 L1272.9 536.5 L1256.0 542.3Z M1256.6 597.1 L1256.6 542.1 M1272.2 591.7 L1272.2 536.7" stroke="#cf7c6c" stroke-width="1.2" fill="none" /><path d="M1257.7 593.7 L1271.2 589.1 L1271.2 540.1 L1257.7 544.7Z M1262.2 592.2 L1262.2 543.2 M1266.7 590.6 L1266.7 541.6 M1257.7 554.7 L1271.2 550.1" stroke="#aab4c4" stroke-width="1.3" fill="none" /><path d="M1257.7 593.7 L1271.2 589.1 L1271.2 540.1 L1257.7 544.7Z M1262.2 592.2 L1262.2 543.2 M1266.7 590.6 L1266.7 541.6 M1257.7 554.7 L1271.2 550.1" stroke="#eef0f4" stroke-width="0.4" fill="none" /><path d="M1263.7 555.6 L1258.5 573.9 L1263.7 588.6 M1265.1 555.2 L1270.3 569.9 L1265.1 588.2" stroke="#45666a" stroke-width="1.6" fill="none" />
<path d="M1283.4 587.9 L1300.3 582.1 L1300.3 527.1 L1283.4 532.9Z M1284.1 587.6 L1284.1 532.6 M1299.6 582.3 L1299.6 527.3" stroke="#cf7c6c" stroke-width="1.2" fill="none" /><path d="M1285.1 584.3 L1298.6 579.7 L1298.6 530.7 L1285.1 535.3Z M1289.6 582.7 L1289.6 533.7 M1294.1 581.2 L1294.1 532.2 M1285.1 545.3 L1298.6 540.7" stroke="#aab4c4" stroke-width="1.3" fill="none" /><path d="M1285.1 584.3 L1298.6 579.7 L1298.6 530.7 L1285.1 535.3Z M1289.6 582.7 L1289.6 533.7 M1294.1 581.2 L1294.1 532.2 M1285.1 545.3 L1298.6 540.7" stroke="#eef0f4" stroke-width="0.4" fill="none" /><path d="M1291.2 546.2 L1286.0 564.5 L1291.2 579.2 M1292.5 545.7 L1297.7 560.5 L1292.5 578.7" stroke="#45666a" stroke-width="1.6" fill="none" />
<path d="M1382.7 752.0 L1400.8 745.8 L1400.8 690.8 L1382.7 697.0Z M1383.4 751.8 L1383.4 696.8 M1400.1 746.1 L1400.1 691.1" stroke="#cf7c6c" stroke-width="1.2" fill="none" /><path d="M1384.5 748.4 L1399.0 743.4 L1399.0 694.4 L1384.5 699.4Z M1389.3 746.8 L1389.3 697.8 M1394.1 745.1 L1394.1 696.1 M1384.5 709.4 L1399.0 704.4" stroke="#aab4c4" stroke-width="1.3" fill="none" /><path d="M1384.5 748.4 L1399.0 743.4 L1399.0 694.4 L1384.5 699.4Z M1389.3 746.8 L1389.3 697.8 M1394.1 745.1 L1394.1 696.1 M1384.5 709.4 L1399.0 704.4" stroke="#eef0f4" stroke-width="0.4" fill="none" /><path d="M1391.0 710.2 L1385.4 728.6 L1391.0 743.2 M1392.5 709.7 L1398.1 724.2 L1392.5 742.7" stroke="#45666a" stroke-width="1.6" fill="none" />
<path d="M1417.3 740.1 L1443.6 731.1 L1443.6 676.1 L1417.3 685.1Z M1418.4 739.8 L1418.4 684.8 M1442.6 731.4 L1442.6 676.4" stroke="#cf7c6c" stroke-width="1.2" fill="none" /><path d="M1420.0 736.2 L1441.0 729.0 L1441.0 680.0 L1420.0 687.2Z M1427.0 733.8 L1427.0 684.8 M1434.0 731.4 L1434.0 682.4 M1420.0 697.2 L1441.0 690.0" stroke="#aab4c4" stroke-width="1.3" fill="none" /><path d="M1420.0 736.2 L1441.0 729.0 L1441.0 680.0 L1420.0 687.2Z M1427.0 733.8 L1427.0 684.8 M1434.0 731.4 L1434.0 682.4 M1420.0 697.2 L1441.0 690.0" stroke="#eef0f4" stroke-width="0.4" fill="none" /><path d="M1429.4 697.0 L1421.3 716.3 L1429.4 730.0 M1431.5 696.2 L1439.7 709.9 L1431.5 729.2" stroke="#45666a" stroke-width="1.6" fill="none" />
<path d="M1461.0 725.1 L1502.8 710.7 L1502.8 655.7 L1461.0 670.1Z M1462.6 724.5 L1462.6 669.5 M1501.1 711.3 L1501.1 656.3" stroke="#cf7c6c" stroke-width="1.2" fill="none" /><path d="M1465.2 720.7 L1498.6 709.2 L1498.6 660.2 L1465.2 671.7Z M1476.3 716.8 L1476.3 667.8 M1487.5 713.0 L1487.5 664.0 M1465.2 681.7 L1498.6 670.2" stroke="#aab4c4" stroke-width="1.3" fill="none" /><path d="M1465.2 720.7 L1498.6 709.2 L1498.6 660.2 L1465.2 671.7Z M1476.3 716.8 L1476.3 667.8 M1487.5 713.0 L1487.5 664.0 M1465.2 681.7 L1498.6 670.2" stroke="#eef0f4" stroke-width="0.4" fill="none" /><path d="M1472.3 682.2 L1467.2 700.5 L1472.3 715.2 M1475.6 681.1 L1480.6 695.9 L1475.6 714.1 M1488.2 676.8 L1483.1 695.0 L1488.2 709.8 M1491.5 675.6 L1496.5 690.4 L1491.5 708.6" stroke="#45666a" stroke-width="1.6" fill="none" />
<path d="M1515.7 706.3 L1557.0 692.1 L1557.0 637.1 L1515.7 651.3Z M1517.3 705.7 L1517.3 650.7 M1555.4 692.7 L1555.4 637.7" stroke="#cf7c6c" stroke-width="1.2" fill="none" /><path d="M1519.8 701.9 L1552.9 690.5 L1552.9 641.5 L1519.8 652.9Z M1530.8 698.1 L1530.8 649.1 M1541.8 694.3 L1541.8 645.3 M1519.8 662.9 L1552.9 651.5" stroke="#aab4c4" stroke-width="1.3" fill="none" /><path d="M1519.8 701.9 L1552.9 690.5 L1552.9 641.5 L1519.8 652.9Z M1530.8 698.1 L1530.8 649.1 M1541.8 694.3 L1541.8 645.3 M1519.8 662.9 L1552.9 651.5" stroke="#eef0f4" stroke-width="0.4" fill="none" /><path d="M1526.8 663.5 L1521.9 681.7 L1526.8 696.5 M1530.1 662.3 L1535.1 677.1 L1530.1 695.3 M1542.5 658.1 L1537.6 676.3 L1542.5 691.1 M1545.8 656.9 L1550.8 671.7 L1545.8 689.9" stroke="#45666a" stroke-width="1.6" fill="none" />
<path d="M1624.7 649.6 L1642.2 643.6 L1642.2 588.6 L1624.7 594.6Z M1625.4 649.4 L1625.4 594.4 M1641.5 643.9 L1641.5 588.9" stroke="#cf7c6c" stroke-width="1.2" fill="none" /><path d="M1626.5 646.0 L1640.4 641.2 L1640.4 592.2 L1626.5 597.0Z M1631.1 644.4 L1631.1 595.4 M1635.8 642.8 L1635.8 593.8 M1626.5 607.0 L1640.4 602.2" stroke="#aab4c4" stroke-width="1.3" fill="none" /><path d="M1626.5 646.0 L1640.4 641.2 L1640.4 592.2 L1626.5 597.0Z M1631.1 644.4 L1631.1 595.4 M1635.8 642.8 L1635.8 593.8 M1626.5 607.0 L1640.4 602.2" stroke="#eef0f4" stroke-width="0.4" fill="none" /><path d="M1632.8 607.9 L1627.4 626.2 L1632.8 640.9 M1634.2 607.4 L1639.6 622.0 L1634.2 640.4" stroke="#45666a" stroke-width="1.6" fill="none" />
<path d="M1679.9 630.7 L1696.4 625.0 L1696.4 570.0 L1679.9 575.7Z M1680.5 630.4 L1680.5 575.4 M1695.8 625.2 L1695.8 570.2" stroke="#cf7c6c" stroke-width="1.2" fill="none" /><path d="M1681.5 627.1 L1694.8 622.5 L1694.8 573.5 L1681.5 578.1Z M1685.9 625.6 L1685.9 576.6 M1690.3 624.1 L1690.3 575.1 M1681.5 588.1 L1694.8 583.5" stroke="#aab4c4" stroke-width="1.3" fill="none" /><path d="M1681.5 627.1 L1694.8 622.5 L1694.8 573.5 L1681.5 578.1Z M1685.9 625.6 L1685.9 576.6 M1690.3 624.1 L1690.3 575.1 M1681.5 588.1 L1694.8 583.5" stroke="#eef0f4" stroke-width="0.4" fill="none" /><path d="M1687.5 589.0 L1682.4 607.3 L1687.5 622.0 M1688.8 588.6 L1693.9 603.3 L1688.8 621.6" stroke="#45666a" stroke-width="1.6" fill="none" />
<path d="M1709.3 620.5 L1726.1 614.8 L1726.1 559.8 L1709.3 565.5Z M1710.0 620.3 L1710.0 565.3 M1725.4 615.0 L1725.4 560.0" stroke="#cf7c6c" stroke-width="1.2" fill="none" /><path d="M1711.0 617.0 L1724.4 612.3 L1724.4 563.3 L1711.0 568.0Z M1715.4 615.4 L1715.4 566.4 M1719.9 613.9 L1719.9 564.9 M1711.0 578.0 L1724.4 573.3" stroke="#aab4c4" stroke-width="1.3" fill="none" /><path d="M1711.0 617.0 L1724.4 612.3 L1724.4 563.3 L1711.0 568.0Z M1715.4 615.4 L1715.4 566.4 M1719.9 613.9 L1719.9 564.9 M1711.0 578.0 L1724.4 573.3" stroke="#eef0f4" stroke-width="0.4" fill="none" /><path d="M1717.0 578.9 L1711.8 597.2 L1717.0 611.9 M1718.4 578.4 L1723.6 593.1 L1718.4 611.4" stroke="#45666a" stroke-width="1.6" fill="none" />
<path d="M1734.1 612.0 L1751.1 606.2 L1751.1 551.2 L1734.1 557.0Z M1734.8 611.8 L1734.8 556.8 M1750.4 606.4 L1750.4 551.4" stroke="#cf7c6c" stroke-width="1.2" fill="none" /><path d="M1735.8 608.4 L1749.4 603.8 L1749.4 554.8 L1735.8 559.4Z M1740.3 606.9 L1740.3 557.9 M1744.9 605.3 L1744.9 556.3 M1735.8 569.4 L1749.4 564.8" stroke="#aab4c4" stroke-width="1.3" fill="none" /><path d="M1735.8 608.4 L1749.4 603.8 L1749.4 554.8 L1735.8 559.4Z M1740.3 606.9 L1740.3 557.9 M1744.9 605.3 L1744.9 556.3 M1735.8 569.4 L1749.4 564.8" stroke="#eef0f4" stroke-width="0.4" fill="none" /><path d="M1741.9 570.3 L1736.6 588.6 L1741.9 603.3 M1743.3 569.9 L1748.5 584.5 L1743.3 602.9" stroke="#45666a" stroke-width="1.6" fill="none" />
<path d="M1309.5 519.4 L1429.6 573.4 M1309.5 581.9 L1429.6 635.9 M1312.1 518.5 L1432.2 572.5 M1312.1 581.0 L1432.2 635.0 M1310.8 581.5 L1310.8 519.0 M1430.9 635.5 L1430.9 573.0 M1429.8 572.5 L1547.4 532.0 M1429.8 635.0 L1547.4 594.5 M1432.0 573.5 L1549.7 533.0 M1432.0 636.0 L1549.7 595.5 M1430.9 635.5 L1430.9 573.0 M1548.6 595.0 L1548.6 532.5 M1547.3 533.0 L1652.9 580.4 M1547.3 595.5 L1652.9 642.9 M1549.8 532.1 L1655.4 579.6 M1549.8 594.6 L1655.4 642.1 M1548.6 595.0 L1548.6 532.5 M1654.1 642.5 L1654.1 580.0 M1349.8 621.1 L1574.0 544.0 M1349.8 683.6 L1574.0 606.5 M1352.0 622.1 L1576.3 545.0 M1352.0 684.6 L1576.3 607.5 M1350.9 684.1 L1350.9 621.6 M1575.2 607.0 L1575.2 544.5 M1277.4 592.9 L1389.5 554.3 M1277.4 655.4 L1389.5 616.8 M1279.6 593.9 L1391.7 555.3 M1279.6 656.4 L1391.7 617.8 M1278.5 655.9 L1278.5 593.4 M1390.6 617.3 L1390.6 554.8 M1282.7 591.9 L1349.6 622.0 M1282.7 654.4 L1349.6 684.5 M1285.3 591.1 L1352.2 621.1 M1285.3 653.6 L1352.2 683.6 M1284.0 654.0 L1284.0 591.5 M1350.9 684.1 L1350.9 621.6 M1246.1 541.2 L1325.9 577.1 M1246.1 603.7 L1325.9 639.6 M1248.7 540.3 L1328.5 576.2 M1248.7 602.8 L1328.5 638.7 M1247.4 603.3 L1247.4 540.8 M1327.2 639.1 L1327.2 576.6 M1278.3 530.1 L1358.1 566.0 M1278.3 592.6 L1358.1 628.5 M1280.9 529.3 L1360.7 565.1 M1280.9 591.8 L1360.7 627.6 M1279.6 592.2 L1279.6 529.7 M1359.4 628.1 L1359.4 565.6 M1313.1 544.8 L1344.4 534.0 M1313.1 607.3 L1344.4 596.5 M1315.4 545.8 L1346.6 535.0 M1315.4 608.3 L1346.6 597.5 M1314.2 607.8 L1314.2 545.3 M1345.5 597.0 L1345.5 534.5 M1305.1 566.7 L1337.3 555.7 M1305.1 629.2 L1337.3 618.2 M1307.4 567.7 L1339.5 556.7 M1307.4 630.2 L1339.5 619.2 M1306.3 629.7 L1306.3 567.2 M1338.4 618.7 L1338.4 556.2 M1526.0 562.0 L1604.1 597.2 M1526.0 624.5 L1604.1 659.7 M1528.5 561.1 L1606.7 596.3 M1528.5 623.6 L1606.7 658.8 M1527.2 624.1 L1527.2 561.6 M1605.4 659.3 L1605.4 596.8 M1317.8 522.1 L1332.5 517.0 M1317.8 584.6 L1332.5 579.5 M1320.0 523.1 L1334.7 518.0 M1320.0 585.6 L1334.7 580.5 M1318.9 585.1 L1318.9 522.6 M1333.6 580.0 L1333.6 517.5 M1332.3 518.0 L1377.4 538.3 M1332.3 580.5 L1377.4 600.8 M1334.9 517.1 L1380.0 537.4 M1334.9 579.6 L1380.0 599.9 M1333.6 580.0 L1333.6 517.5 M1378.7 600.3 L1378.7 537.8 M1362.9 542.4 L1377.6 537.3 M1362.9 604.9 L1377.6 599.8 M1365.2 543.4 L1379.9 538.3 M1365.2 605.9 L1379.9 600.8 M1364.0 605.4 L1364.0 542.9 M1378.7 600.3 L1378.7 537.8 M1343.6 533.7 L1358.3 528.6 M1343.6 596.2 L1358.3 591.1 M1345.8 534.7 L1360.5 529.6 M1345.8 597.2 L1360.5 592.1 M1344.7 596.7 L1344.7 534.2 M1359.4 591.6 L1359.4 529.1 M1497.5 571.8 L1516.8 580.5 M1497.5 634.3 L1516.8 643.0 M1500.0 570.9 L1519.4 579.6 M1500.0 633.4 L1519.4 642.1 M1498.8 633.9 L1498.8 571.4 M1518.1 642.6 L1518.1 580.1 M1517.0 579.6 L1545.5 569.8 M1517.0 642.1 L1545.5 632.3 M1519.2 580.6 L1547.7 570.8 M1519.2 643.1 L1547.7 633.3 M1518.1 642.6 L1518.1 580.1 M1546.6 632.8 L1546.6 570.3 M1351.5 621.1 L1372.6 613.9 M1351.5 683.6 L1372.6 676.4 M1353.8 622.1 L1374.9 614.9 M1353.8 684.6 L1374.9 677.4 M1352.6 684.1 L1352.6 621.6 M1373.8 676.9 L1373.8 614.4 M1372.5 614.8 L1383.8 619.9 M1372.5 677.3 L1383.8 682.4 M1375.1 613.9 L1386.3 619.0 M1375.1 676.4 L1386.3 681.5 M1373.8 676.9 L1373.8 614.4 M1385.1 681.9 L1385.1 619.4 M1362.8 626.2 L1383.9 618.9 M1362.8 688.7 L1383.9 681.4 M1365.1 627.2 L1386.2 619.9 M1365.1 689.7 L1386.2 682.4 M1363.9 689.2 L1363.9 626.7 M1385.1 681.9 L1385.1 619.4 M1245.8 579.7 L1277.2 593.8 M1245.8 642.2 L1277.2 656.3 M1248.4 578.8 L1279.8 592.9 M1248.4 641.3 L1279.8 655.4 M1247.1 641.8 L1247.1 579.3 M1278.5 655.9 L1278.5 593.4" stroke="#151515" stroke-width="1" fill="none" />
<path d="M1156.1 610.5 L1175.4 603.9 L1187.5 609.3 L1168.2 616.0Z M1156.1 673.0 L1175.4 666.4 L1187.5 671.8 L1168.2 678.5Z M1156.1 673.0 L1156.1 610.5 M1175.4 666.4 L1175.4 603.9 M1187.5 671.8 L1187.5 609.3 M1168.2 678.5 L1168.2 616.0 M1158.8 610.6 L1175.2 605.0 L1184.7 609.3 L1168.4 614.9Z M1158.8 673.1 L1175.2 667.5 L1184.7 671.8 L1168.4 677.4Z M1158.8 673.1 L1158.8 610.6 M1175.2 667.5 L1175.2 605.0 M1184.7 671.8 L1184.7 609.3 M1168.4 677.4 L1168.4 614.9" stroke="#0c0c0c" stroke-width="0.9" fill="none" />
<path d="M1284.9 591.2 L1317.1 580.1 L1345.3 592.8 L1313.1 603.9Z M1284.9 653.7 L1317.1 642.6 L1345.3 655.3 L1313.1 666.4Z M1284.9 653.7 L1284.9 591.2 M1317.1 642.6 L1317.1 580.1 M1345.3 655.3 L1345.3 592.8 M1313.1 666.4 L1313.1 603.9 M1287.7 591.3 L1316.9 581.2 L1342.6 592.7 L1313.3 602.8Z M1287.7 653.8 L1316.9 643.7 L1342.6 655.2 L1313.3 665.3Z M1287.7 653.8 L1287.7 591.3 M1316.9 643.7 L1316.9 581.2 M1342.6 655.2 L1342.6 592.7 M1313.3 665.3 L1313.3 602.8" stroke="#0c0c0c" stroke-width="0.9" fill="none" />
<path d="M1345.5 695.7 L1364.8 689.1 L1376.9 694.5 L1357.6 701.2Z M1345.5 758.2 L1364.8 751.6 L1376.9 757.0 L1357.6 763.7Z M1345.5 758.2 L1345.5 695.7 M1364.8 751.6 L1364.8 689.1 M1376.9 757.0 L1376.9 694.5 M1357.6 763.7 L1357.6 701.2 M1348.3 695.8 L1364.6 690.2 L1374.1 694.5 L1357.8 700.1Z M1348.3 758.3 L1364.6 752.7 L1374.1 757.0 L1357.8 762.6Z M1348.3 758.3 L1348.3 695.8 M1364.6 752.7 L1364.6 690.2 M1374.1 757.0 L1374.1 694.5 M1357.8 762.6 L1357.8 700.1" stroke="#0c0c0c" stroke-width="0.9" fill="none" />
<path d="M1537.3 610.6 L1556.6 604.0 L1568.7 609.4 L1549.4 616.0Z M1537.3 673.1 L1556.6 666.5 L1568.7 671.9 L1549.4 678.5Z M1537.3 673.1 L1537.3 610.6 M1556.6 666.5 L1556.6 604.0 M1568.7 671.9 L1568.7 609.4 M1549.4 678.5 L1549.4 616.0 M1540.0 610.7 L1556.4 605.0 L1565.9 609.3 L1549.6 614.9Z M1540.0 673.2 L1556.4 667.5 L1565.9 671.8 L1549.6 677.4Z M1540.0 673.2 L1540.0 610.7 M1556.4 667.5 L1556.4 605.0 M1565.9 671.8 L1565.9 609.3 M1549.6 677.4 L1549.6 614.9" stroke="#0c0c0c" stroke-width="0.9" fill="none" />
<path d="M1665.9 566.4 L1685.2 559.7 L1697.3 565.2 L1678.0 571.8Z M1665.9 628.9 L1685.2 622.2 L1697.3 627.7 L1678.0 634.3Z M1665.9 628.9 L1665.9 566.4 M1685.2 622.2 L1685.2 559.7 M1697.3 627.7 L1697.3 565.2 M1678.0 634.3 L1678.0 571.8 M1668.7 566.4 L1685.1 560.8 L1694.6 565.1 L1678.2 570.7Z M1668.7 628.9 L1685.1 623.3 L1694.6 627.6 L1678.2 633.2Z M1668.7 628.9 L1668.7 566.4 M1685.1 623.3 L1685.1 560.8 M1694.6 627.6 L1694.6 565.1 M1678.2 633.2 L1678.2 570.7" stroke="#0c0c0c" stroke-width="0.9" fill="none" />
<path d="M1429.2 427.1 L1439.3 423.6 L1449.0 427.9 L1438.9 431.4Z M1429.2 489.6 L1439.3 486.1 L1449.0 490.4 L1438.9 493.9Z M1429.2 489.6 L1429.2 427.1 M1439.3 486.1 L1439.3 423.6 M1449.0 490.4 L1449.0 427.9 M1438.9 493.9 L1438.9 431.4 M1432.0 427.1 L1439.2 424.7 L1446.2 427.9 L1439.1 430.3Z M1432.0 489.6 L1439.2 487.2 L1446.2 490.4 L1439.1 492.8Z M1432.0 489.6 L1432.0 427.1 M1439.2 487.2 L1439.2 424.7 M1446.2 490.4 L1446.2 427.9 M1439.1 492.8 L1439.1 430.3" stroke="#0c0c0c" stroke-width="0.9" fill="none" />
<path d="M1473.4 427.2 L1484.4 423.4 L1494.1 427.8 L1483.1 431.6Z M1473.4 489.7 L1484.4 485.9 L1494.1 490.3 L1483.1 494.1Z M1473.4 489.7 L1473.4 427.2 M1484.4 485.9 L1484.4 423.4 M1494.1 490.3 L1494.1 427.8 M1483.1 494.1 L1483.1 431.6 M1476.1 427.3 L1484.2 424.5 L1491.3 427.7 L1483.2 430.5Z M1476.1 489.8 L1484.2 487.0 L1491.3 490.2 L1483.2 493.0Z M1476.1 489.8 L1476.1 427.3 M1484.2 487.0 L1484.2 424.5 M1491.3 490.2 L1491.3 427.7 M1483.2 493.0 L1483.2 430.5" stroke="#0c0c0c" stroke-width="0.9" fill="none" />
<path d="M1573.1 468.4 L1587.8 463.4 L1605.5 471.4 L1590.8 476.4Z M1573.1 530.9 L1587.8 525.9 L1605.5 533.9 L1590.8 538.9Z M1573.1 530.9 L1573.1 468.4 M1587.8 525.9 L1587.8 463.4 M1605.5 533.9 L1605.5 471.4 M1590.8 538.9 L1590.8 476.4 M1575.8 468.5 L1587.6 464.5 L1602.8 471.3 L1591.0 475.3Z M1575.8 531.0 L1587.6 527.0 L1602.8 533.8 L1591.0 537.8Z M1575.8 531.0 L1575.8 468.5 M1587.6 527.0 L1587.6 464.5 M1602.8 533.8 L1602.8 471.3 M1591.0 537.8 L1591.0 475.3" stroke="#0c0c0c" stroke-width="0.9" fill="none" />
<path d="M1467.9 517.4 L1488.1 510.4 L1501.0 516.2 L1480.8 523.2Z M1467.9 579.9 L1488.1 572.9 L1501.0 578.7 L1480.8 585.7Z M1467.9 579.9 L1467.9 517.4 M1488.1 572.9 L1488.1 510.4 M1501.0 578.7 L1501.0 516.2 M1480.8 585.7 L1480.8 523.2 M1470.7 517.5 L1487.9 511.5 L1498.3 516.2 L1481.0 522.1Z M1470.7 580.0 L1487.9 574.0 L1498.3 578.7 L1481.0 584.6Z M1470.7 580.0 L1470.7 517.5 M1487.9 574.0 L1487.9 511.5 M1498.3 578.7 L1498.3 516.2 M1481.0 584.6 L1481.0 522.1" stroke="#0c0c0c" stroke-width="0.9" fill="none" />
<path d="M1429.2 422.0 L1441.3 427.4 M1429.2 484.5 L1441.3 489.9 M1441.3 427.4 L1464.3 419.5 M1441.3 489.9 L1464.3 482.0 M1464.3 419.5 L1484.4 428.6 M1464.3 482.0 L1484.4 491.1 M1484.4 428.6 L1499.1 423.5 M1484.4 491.1 L1499.1 486.0" stroke="#111" stroke-width="1" fill="none" />
<path d="M1692.4 467.4 L1709.8 461.4 L1736.4 473.4 L1719.0 479.4Z M1692.4 501.4 L1709.8 495.4 L1736.4 507.4 L1719.0 513.4Z M1692.4 501.4 L1692.4 467.4 M1709.8 495.4 L1709.8 461.4 M1736.4 507.4 L1736.4 473.4 M1719.0 513.4 L1719.0 479.4 M1695.1 467.5 L1709.6 462.5 L1733.7 473.3 L1719.1 478.3Z M1695.1 501.5 L1709.6 496.5 L1733.7 507.3 L1719.1 512.3Z M1695.1 501.5 L1695.1 467.5 M1709.6 496.5 L1709.6 462.5 M1733.7 507.3 L1733.7 473.3 M1719.1 512.3 L1719.1 478.3 M1697.9 467.6 L1709.5 463.6 L1730.9 473.2 L1719.3 477.2Z M1697.9 501.6 L1709.5 497.6 L1730.9 507.2 L1719.3 511.2Z M1697.9 501.6 L1697.9 467.6 M1709.5 497.6 L1709.5 463.6 M1730.9 507.2 L1730.9 473.2 M1719.3 511.2 L1719.3 477.2" stroke="#0c0c0c" stroke-width="0.9" fill="none" />
<path d="M1284.9 591.2 L1317.1 580.1 L1345.3 592.8 L1313.1 603.9Z M1284.9 653.7 L1317.1 642.6 L1345.3 655.3 L1313.1 666.4Z M1284.9 653.7 L1284.9 591.2 M1317.1 642.6 L1317.1 580.1 M1345.3 655.3 L1345.3 592.8 M1313.1 666.4 L1313.1 603.9 M1287.7 591.3 L1316.9 581.2 L1342.6 592.7 L1313.3 602.8Z M1287.7 653.8 L1316.9 643.7 L1342.6 655.2 L1313.3 665.3Z M1287.7 653.8 L1287.7 591.3 M1316.9 643.7 L1316.9 581.2 M1342.6 655.2 L1342.6 592.7 M1313.3 665.3 L1313.3 602.8 M1290.5 591.3 L1316.7 582.3 L1339.8 592.7 L1313.5 601.7Z M1290.5 653.8 L1316.7 644.8 L1339.8 655.2 L1313.5 664.2Z M1290.5 653.8 L1290.5 591.3 M1316.7 644.8 L1316.7 582.3 M1339.8 655.2 L1339.8 592.7 M1313.5 664.2 L1313.5 601.7" stroke="#0c0c0c" stroke-width="0.9" fill="none" />
<path d="M1354 624h5v64h-5z M1345 540h3v52h-3z M1359 566h4v38h-4z M1440 426h3v62h-3z M1484 430h3v62h-3z M1580 470h3v68h-3z" fill="#111"/>
<path d="M1366 620v70 M1372 617v72 M1378 615v72 M1384 613v70 M1336 600v60 M1322 590v55" stroke="#1a1a1a" stroke-width="1" fill="none" />
<path d="M1318.5 662.5 L1318.5 602.0 M1323.9 660.7 L1323.9 600.2 M1329.2 658.8 L1329.2 598.3 M1334.6 657.0 L1334.6 596.5 M1340.0 655.2 L1340.0 594.7 M1440.6 491.3 L1440.6 430.8 M1442.3 490.8 L1442.3 430.3 M1444.0 490.2 L1444.0 429.7 M1445.6 489.6 L1445.6 429.1 M1447.3 489.0 L1447.3 428.5 M1484.9 491.5 L1484.9 431.0 M1486.7 490.8 L1486.7 430.3 M1488.6 490.2 L1488.6 429.7 M1490.4 489.6 L1490.4 429.1 M1492.2 488.9 L1492.2 428.4 M1593.3 536.1 L1593.3 475.6 M1595.7 535.2 L1595.7 474.7 M1598.2 534.4 L1598.2 473.9 M1600.6 533.5 L1600.6 473.0 M1603.1 532.7 L1603.1 472.2 M1681.2 631.2 L1681.2 570.7 M1684.5 630.1 L1684.5 569.6 M1687.7 629.0 L1687.7 568.5 M1690.9 627.9 L1690.9 567.4 M1694.1 626.8 L1694.1 566.3 M1360.8 760.6 L1360.8 700.1 M1364.0 759.5 L1364.0 699.0 M1367.2 758.3 L1367.2 697.8 M1370.5 757.2 L1370.5 696.7 M1373.7 756.1 L1373.7 695.6 M1721.9 510.4 L1721.9 480.4 M1724.8 509.4 L1724.8 479.4 M1727.7 508.4 L1727.7 478.4 M1730.6 507.4 L1730.6 477.4 M1733.5 506.4 L1733.5 476.4" stroke="#6a7480" stroke-width="0.7" fill="none" />
<path d="M1237.0 722.3 L1350.9 683.1" stroke="#e0a8d0" stroke-width="1.4" fill="none" />
<path d="M1445.0 488.6 L1459.7 483.6 L1459.7 445.6 L1445.0 450.6Z M1452.3 486.1 L1452.3 448.1" stroke="#e0a448" stroke-width="2.2" fill="none" /><path d="M1452.3 451.1 L1446.4 469.1 L1452.3 483.1 L1458.2 465.1Z" stroke="#222" stroke-width="1" fill="none" />
<path d="M1401.1 622.1 L1418.8 630.0 L1418.8 592.0 L1401.1 584.1Z M1410.0 626.0 L1410.0 588.0" stroke="#e0a448" stroke-width="2.2" fill="none" /><path d="M1410.0 591.0 L1402.9 603.8 L1410.0 623.0 L1417.1 610.2Z" stroke="#222" stroke-width="1" fill="none" />
<path d="M1475.0 641.4 L1496.1 634.2 L1496.1 596.2 L1475.0 603.4Z M1485.5 637.8 L1485.5 599.8" stroke="#e0a448" stroke-width="2.2" fill="none" /><path d="M1485.5 602.8 L1477.1 621.7 L1485.5 634.8 L1494.0 615.9Z" stroke="#222" stroke-width="1" fill="none" />
<path d="M1552.6 596.8 L1571.1 605.2 L1571.1 567.2 L1552.6 558.8Z M1561.9 601.0 L1561.9 563.0" stroke="#e0a448" stroke-width="2.2" fill="none" /><path d="M1561.9 566.0 L1554.4 578.7 L1561.9 598.0 L1569.3 585.3Z" stroke="#222" stroke-width="1" fill="none" />
<path d="M1328.3 673.9 L1346.1 681.9 L1346.1 643.9 L1328.3 635.9Z M1337.2 677.9 L1337.2 639.9" stroke="#e0a448" stroke-width="2.2" fill="none" /><path d="M1337.2 642.9 L1330.1 655.7 L1337.2 674.9 L1344.3 662.1Z" stroke="#222" stroke-width="1" fill="none" />
<path d="M1344.9 621.6 L1358.6 627.7 L1358.6 589.7 L1344.9 583.6Z M1351.7 624.6 L1351.7 586.6" stroke="#e0a448" stroke-width="2.2" fill="none" /><path d="M1351.7 589.6 L1346.2 603.2 L1351.7 621.6 L1357.2 608.1Z" stroke="#222" stroke-width="1" fill="none" />
<path d="M1293.4 623.9 L1305.4 629.4 L1305.4 591.4 L1293.4 585.9Z M1299.4 626.6 L1299.4 588.6" stroke="#e0a448" stroke-width="2.2" fill="none" /><path d="M1299.4 591.6 L1294.6 605.5 L1299.4 623.6 L1304.2 609.8Z" stroke="#222" stroke-width="1" fill="none" />
<path d="M1301.3 602.0 L1312.6 607.1 L1312.6 569.1 L1301.3 564.0Z M1307.0 604.5 L1307.0 566.5" stroke="#e0a448" stroke-width="2.2" fill="none" /><path d="M1307.0 569.5 L1302.5 583.5 L1307.0 601.5 L1311.5 587.6Z" stroke="#222" stroke-width="1" fill="none" />
<path d="M1500.4 634.6 L1516.5 641.9 L1516.5 603.9 L1500.4 596.6Z M1508.4 638.2 L1508.4 600.2" stroke="#e0a448" stroke-width="2.2" fill="none" /><path d="M1508.4 603.2 L1502.0 616.3 L1508.4 635.2 L1514.9 622.1Z" stroke="#222" stroke-width="1" fill="none" />
<path d="M1250 522L1278 536L1307 575L1332 590L1332 606L1316 600L1280 586L1249 557L1247 530Z M1252 596L1283 593L1292 600L1292 610L1254 614Z M1214 572L1242 566L1242 586L1214 591Z" fill="#9e998b"/>
<path d="M1262 545l40 45 M1258 555l34 38" stroke="#d8c0a8" stroke-width="1" fill="none" stroke-dasharray="2 2"/>
<path d="M1332 590L1360 598L1392 606L1392 618L1360 612L1332 606Z" fill="#b8b4a8" opacity="0.75"/>
<path d="M1393 880V829" stroke="#1a6af0" stroke-width="2"/><path d="M1393 880L1436 865" stroke="#f01818" stroke-width="2.2"/><path d="M1393 880L1356 864" stroke="#18c0a0" stroke-width="2"/>
<path d="M1386 810h13l-13 13h13 M1441 856l11 11 M1452 856l-11 11 M1345 852l5 5 5-5 M1350 857v5" stroke="#6a6a6a" stroke-width="1.6" fill="none"/>
</svg>
<div class="a" style="left:320px;top:970px;width:1596px;height:2px;background:#f8f8f8"></div>
<div class="a" style="left:320px;top:971px;width:1596px;height:1px;background:#d6d6d6"></div>
<div class="a" style="left:320px;top:972px;width:1596px;height:31px;background:#e6e6e6"></div>
<div class="a" style="left:319px;top:972px;width:646px;height:30px;background:#fcfcfc;border-radius:4px"></div>
<div class="a" style="left:964px;top:972px;width:146px;height:30px;background:#fcfcfc;border-radius:4px"></div>
<svg style="left:322px;top:978px" width="4" height="16"><g fill="#9a9a9a"><rect x="0.5" y="1" width="2" height="2"/><rect x="0.5" y="5" width="2" height="2"/><rect x="0.5" y="9" width="2" height="2"/><rect x="0.5" y="13" width="2" height="2"/></g></svg>
<div class="a" style="left:334px;top:976px;width:1.5px;height:17px;background:#111"></div>
<div class="a" style="left:933px;top:978px;width:1px;height:17px;background:#c8c8c8"></div>
<svg style="left:945px;top:983px" width="10" height="7"><path d="M1 6l4-4 4 4" stroke="#2a5a78" stroke-width="1.4" fill="none"/></svg>
<svg style="left:968px;top:978px" width="4" height="16"><g fill="#9a9a9a"><rect x="0.5" y="1" width="2" height="2"/><rect x="0.5" y="5" width="2" height="2"/><rect x="0.5" y="9" width="2" height="2"/><rect x="0.5" y="13" width="2" height="2"/></g></svg>
<div class="a t12" style="left:979px;top:976px;line-height:17px;color:#333">绘制比例</div>
<div class="a" style="left:1035px;top:975px;width:71px;height:25px;background:#fcfcfc;border:1px solid #b9b9b9"></div>
<div class="a t12" style="left:1039px;top:979px;font-size:12px;line-height:17px;color:#222">跟随全局</div>
<svg style="left:1095px;top:986px" width="7" height="5"><path d="M0 0h7l-3.5 4z" fill="#707070"/></svg>
<div class="a" style="left:0;top:1002px;width:1916px;height:2px;background:#d9d9d9"></div>
<div class="a" style="left:0;top:1004px;width:1916px;height:27px;background:#f0f0f0"></div>
<div class="a t12" style="left:947px;top:1007px;line-height:16px;color:#333;font-size:12.5px">968.42 , 40918.93 , 0.00</div>
<svg style="left:4px;top:1008px" width="18" height="17" viewBox="0 0 18 17"><path d="M1 1.5h5.5l1.5 1.5h8.5v12.5h-15z" fill="#d8f0f4" stroke="#1d5a7a" stroke-width="1.4" stroke-linejoin="round"/><path d="M9.5 2.5h5" stroke="#2aa0a8" stroke-width="1.5"/></svg>
<svg style="left:30px;top:1008px" width="17" height="17" viewBox="0 0 17 17"><path d="M4 1H1v3.5 M13 1h3v3.5 M16 12.5V16h-3 M4 16H1v-3.5" stroke="#1d5a7a" stroke-width="1.3" fill="none"/><rect x="3.8" y="2.8" width="3.8" height="11.4" fill="none" stroke="#1d5a7a" stroke-width="1.2"/><rect x="9.4" y="2.8" width="3.8" height="11.4" fill="none" stroke="#1d5a7a" stroke-width="1.2"/></svg>
<svg style="left:56px;top:1008px" width="18" height="17" viewBox="0 0 18 17"><rect x="1" y="1" width="15.5" height="14" fill="#fff" stroke="#1d5a7a" stroke-width="1.4"/><path d="M1 4.5h15.5" stroke="#1d5a7a" stroke-width="1.2"/><path d="M2.5 2.8h1.5M5 2.8h1.5" stroke="#1d5a7a" stroke-width="1"/><rect x="9" y="9" width="8" height="8" fill="#f0f0f0"/><path d="M13 9.5v7M9.5 13h7" stroke="#2aa0a8" stroke-width="1.4"/></svg>
<div class="a" style="left:81px;top:1010px;width:1px;height:15px;background:#c8c8c8"></div>
<svg style="left:89px;top:1008px" width="17" height="17" viewBox="0 0 17 17"><path d="M1 4.5V1h3.5 M12.5 1H16v3.5 M16 12.5V16h-3.5 M4.5 16H1v-3.5" stroke="#1d5a7a" stroke-width="1.4" fill="none"/><circle cx="8.5" cy="8.5" r="4" fill="#cfe8ec"/><path d="M8.5 3.5v10M3.5 8.5h10" stroke="#1d5a7a" stroke-width="2"/></svg>
<svg style="left:116px;top:1008px" width="17" height="17" viewBox="0 0 17 17"><path d="M4 9V4.2a1.2 1.2 0 0 1 2.4 0V8 M6.4 8V2.5a1.2 1.2 0 0 1 2.4 0V8 M8.8 8V3.3a1.2 1.2 0 0 1 2.4 0V8.5 M11.2 8.5V5a1.2 1.2 0 0 1 2.4 0v5.5c0 3.5-2 5.5-5 5.5s-4-1-5.5-3.5L1.5 10a1.2 1.2 0 0 1 2-1.2L4.5 10" fill="#fff" stroke="#1d5a7a" stroke-width="1.2" stroke-linejoin="round"/></svg>
<svg style="left:141px;top:1008px" width="18" height="17" viewBox="0 0 18 17"><path d="M1.5 8.5C4 4.5 7 11 9 8.5S13 4 16.5 8.5 M9 1C5 3.5 11.5 6.5 9 8.5S6 13 9 16" stroke="#1d5a7a" stroke-width="1.3" fill="none"/><path d="M14.5 6.5l2 2-2.8 0.8z M7 14l2 2 0.6-2.8z" fill="#1d5a7a"/></svg>
<svg style="left:167px;top:1008px" width="18" height="17" viewBox="0 0 18 17"><circle cx="7" cy="7" r="5.7" fill="#fff" stroke="#1d5a7a" stroke-width="1.4"/><path d="M11.2 11.2L16.5 16.5" stroke="#1d5a7a" stroke-width="1.5"/><g fill="#2aa0a8"><circle cx="7" cy="3.8" r="0.9"/><circle cx="7" cy="10.2" r="0.9"/><circle cx="3.8" cy="7" r="0.9"/><circle cx="10.2" cy="7" r="0.9"/></g></svg>
<div class="a" style="left:192px;top:1010px;width:1px;height:15px;background:#c8c8c8"></div>
<svg style="left:201px;top:1008px" width="16" height="17" viewBox="0 0 16 17"><path d="M7.5 1L14 4.5v8L7.5 16 1 12.5v-8z" fill="#fff" stroke="none"/><path d="M1 4.5L7.5 8v8L1 12.5z" fill="#fff"/><path d="M14 4.5L7.5 8v8l6.5-3.5z" fill="#fff"/><path d="M7.5 1L14 4.5v8L7.5 16 1 12.5v-8z M1 4.5L7.5 8 14 4.5 M7.5 8v8" stroke="#1d5a7a" stroke-width="1.3" fill="none" stroke-linejoin="round"/></svg>
<svg style="left:227px;top:1008px" width="16" height="17" viewBox="0 0 16 17"><path d="M7.5 1L14 4.5v8L7.5 16 1 12.5v-8z" fill="#fff" stroke="none"/><path d="M1 4.5L7.5 8v8L1 12.5z" fill="#fff"/><path d="M14 4.5L7.5 8v8l6.5-3.5z" fill="#fff"/><path d="M7.5 1L14 4.5v8L7.5 16 1 12.5v-8z M1 4.5L7.5 8 14 4.5 M7.5 8v8" stroke="#1d5a7a" stroke-width="1.3" fill="none" stroke-linejoin="round"/><path d="M7.5 1v7 M1 12.5L7.5 8 14 12.5" stroke="#1d5a7a" stroke-width="0.9" fill="none"/></svg>
<svg style="left:253px;top:1008px" width="16" height="17" viewBox="0 0 16 17"><path d="M7.5 1L14 4.5v8L7.5 16 1 12.5v-8z" fill="#fff" stroke="none"/><path d="M1 4.5L7.5 8v8L1 12.5z" fill="#a8c0c8"/><path d="M14 4.5L7.5 8v8l6.5-3.5z" fill="#cce8ee"/><path d="M7.5 1L14 4.5v8L7.5 16 1 12.5v-8z M1 4.5L7.5 8 14 4.5 M7.5 8v8" stroke="#1d5a7a" stroke-width="1.3" fill="none" stroke-linejoin="round"/></svg>
<svg style="left:279px;top:1008px" width="16" height="17" viewBox="0 0 16 17"><path d="M7.5 1L14 4.5v8L7.5 16 1 12.5v-8z" fill="#fff" stroke="none"/><path d="M1 4.5L7.5 8v8L1 12.5z" fill="#a8c0c8"/><path d="M14 4.5L7.5 8v8l6.5-3.5z" fill="#cce8ee"/><path d="M7.5 1L14 4.5v8L7.5 16 1 12.5v-8z M1 4.5L7.5 8 14 4.5 M7.5 8v8" stroke="#3a7aa0" stroke-width="1.3" fill="none" stroke-linejoin="round"/></svg>
<div class="a" style="left:303px;top:1007px;width:20px;height:20px;background:#c4dfdb;border:1.5px solid #2e9484"></div>
<svg style="left:305px;top:1009px" width="16" height="17" viewBox="0 0 16 17"><path d="M8 2L14 5v7.5L8 15.5 2 12.5V5z" fill="#cfe6ea"/><path d="M2 5l6 3v7.5L2 12.5z" fill="#a9bec4"/><path d="M8 2L14 5 8 8 2 5z" fill="#eefafa"/></svg>
<div class="a" style="left:329px;top:1010px;width:1px;height:15px;background:#c8c8c8"></div>
<div class="a" style="left:336px;top:1007px;width:20px;height:20px;background:#c4dfdb;border:1.5px solid #2e9484"></div>
<svg style="left:338px;top:1009px" width="16" height="16" viewBox="0 0 16 16"><path d="M1 3h5M1 7h4M1 11h2" stroke="#1d5a7a" stroke-width="1.3"/><path d="M5 15L12 1" stroke="#2aa0a8" stroke-width="1.2"/><path d="M12 3h3v3h-4.5z M9.5 8h5.5v3h-7z M7 12.5h8V15H5.5z" fill="#2aa0a8"/></svg>
<svg style="left:366px;top:1012px" width="12" height="10" viewBox="0 0 12 10"><path d="M1.5 5l4.5-4 4.5 4 M1.5 9.5l4.5-4 4.5 4" stroke="#1d5a7a" stroke-width="1.3" fill="none"/></svg>
<div class="a" style="left:388px;top:1010px;width:1px;height:15px;background:#c8c8c8"></div>
<div class="a" style="left:401px;top:1016px;width:8px;height:1.5px;background:#a0a0a0"></div>
<div class="a" style="left:418px;top:1016px;width:61px;height:1px;background:#b8b8b8"></div>
<div class="a" style="left:446px;top:1010px;width:4px;height:12px;background:#f4f4f4;border:1px solid #a8a8a8"></div>
<svg style="left:488px;top:1012px" width="9" height="9"><path d="M4.5 0.5v8M0.5 4.5h8" stroke="#a0a0a0" stroke-width="1.5"/></svg>
<div class="a" style="left:1723px;top:1007px;width:20px;height:20px;background:#c4dfdb;border:1.5px solid #2e9484"></div>
<svg style="left:1725px;top:1009px" width="16" height="16" viewBox="0 0 16 16"><rect x="4" y="4" width="10.5" height="10.5" fill="none" stroke="#1d5a7a" stroke-width="1.3"/><rect x="1" y="1" width="4.5" height="4.5" fill="#fff" stroke="#2aa0a8" stroke-width="1.1"/></svg>
<svg style="left:1745px;top:1011px" width="8" height="6" viewBox="0 0 8 6"><path d="M1 5l3-3.5 3 3.5" stroke="#555" stroke-width="1" fill="none"/></svg>
<div class="a" style="left:1759px;top:1007px;width:20px;height:20px;background:#c4dfdb;border:1.5px solid #2e9484"></div>
<svg style="left:1761px;top:1009px" width="16" height="16" viewBox="0 0 16 16"><path d="M1.5 14.5L14.5 1.5" stroke="#1d5a7a" stroke-width="1.2"/><circle cx="8" cy="8" r="2.3" fill="#c4dfdb" stroke="#1d5a7a" stroke-width="1.2"/><path d="M2 15h3" stroke="#2aa0a8" stroke-width="1"/></svg>
<div class="a" style="left:1785px;top:1007px;width:20px;height:20px;background:#c4dfdb;border:1.5px solid #2e9484"></div>
<svg style="left:1787px;top:1009px" width="16" height="16" viewBox="0 0 16 16"><path d="M2 1v14h13" stroke="#1d5a7a" stroke-width="1.3" fill="none"/><path d="M2 5c5 1 7 5 7.5 10" stroke="#1d5a7a" stroke-width="1.1" fill="none"/><path d="M11 15h1.5M14 15h1" stroke="#2aa0a8" stroke-width="1"/></svg>
<svg style="left:1812px;top:1008px" width="18" height="18" viewBox="0 0 18 18"><path d="M2.5 1v15h14" stroke="#1d5a7a" stroke-width="1.4" fill="none"/><path d="M7 12h9" stroke="#2aa0a8" stroke-width="1"/></svg>
<svg style="left:1839px;top:1008px" width="17" height="17" viewBox="0 0 17 17"><rect x="1" y="1" width="15" height="15" fill="none" stroke="#1d5a7a" stroke-width="1.4"/><path d="M4.75 1v15M8.5 1v15M12.25 1v15M1 4.75h15M1 8.5h15M1 12.25h15" stroke="#1d5a7a" stroke-width="1.1"/></svg>
<svg style="left:1864px;top:1008px" width="18" height="18" viewBox="0 0 18 18"><path d="M9 1l3 3M9 1L6 4 M9 17l3-3M9 17l-3-3 M1 9l3-3M1 9l3 3 M17 9l-3-3M17 9l-3 3" stroke="#1d5a7a" stroke-width="1.3" fill="none"/><path d="M3.5 9q5.5-6 11 0q-5.5 6-11 0z" fill="#fff" stroke="#1d5a7a" stroke-width="1.2"/><circle cx="9" cy="9" r="1.8" fill="#1d5a7a"/></svg>
<svg style="left:1889px;top:1008px" width="18" height="18" viewBox="0 0 18 18"><polygon points="16.85,7.44 15.18,10.23 15.65,13.44 12.50,14.24 10.56,16.85 7.77,15.18 4.56,15.65 3.76,12.50 1.15,10.56 2.82,7.77 2.35,4.56 5.50,3.76 7.44,1.15 10.23,2.82 13.44,2.35 14.24,5.50" fill="#fff" stroke="#2a7aa8" stroke-width="1.4" stroke-linejoin="round"/><circle cx="9" cy="9" r="2.6" fill="none" stroke="#2a7aa8" stroke-width="1.4"/></svg>
</body></html>
